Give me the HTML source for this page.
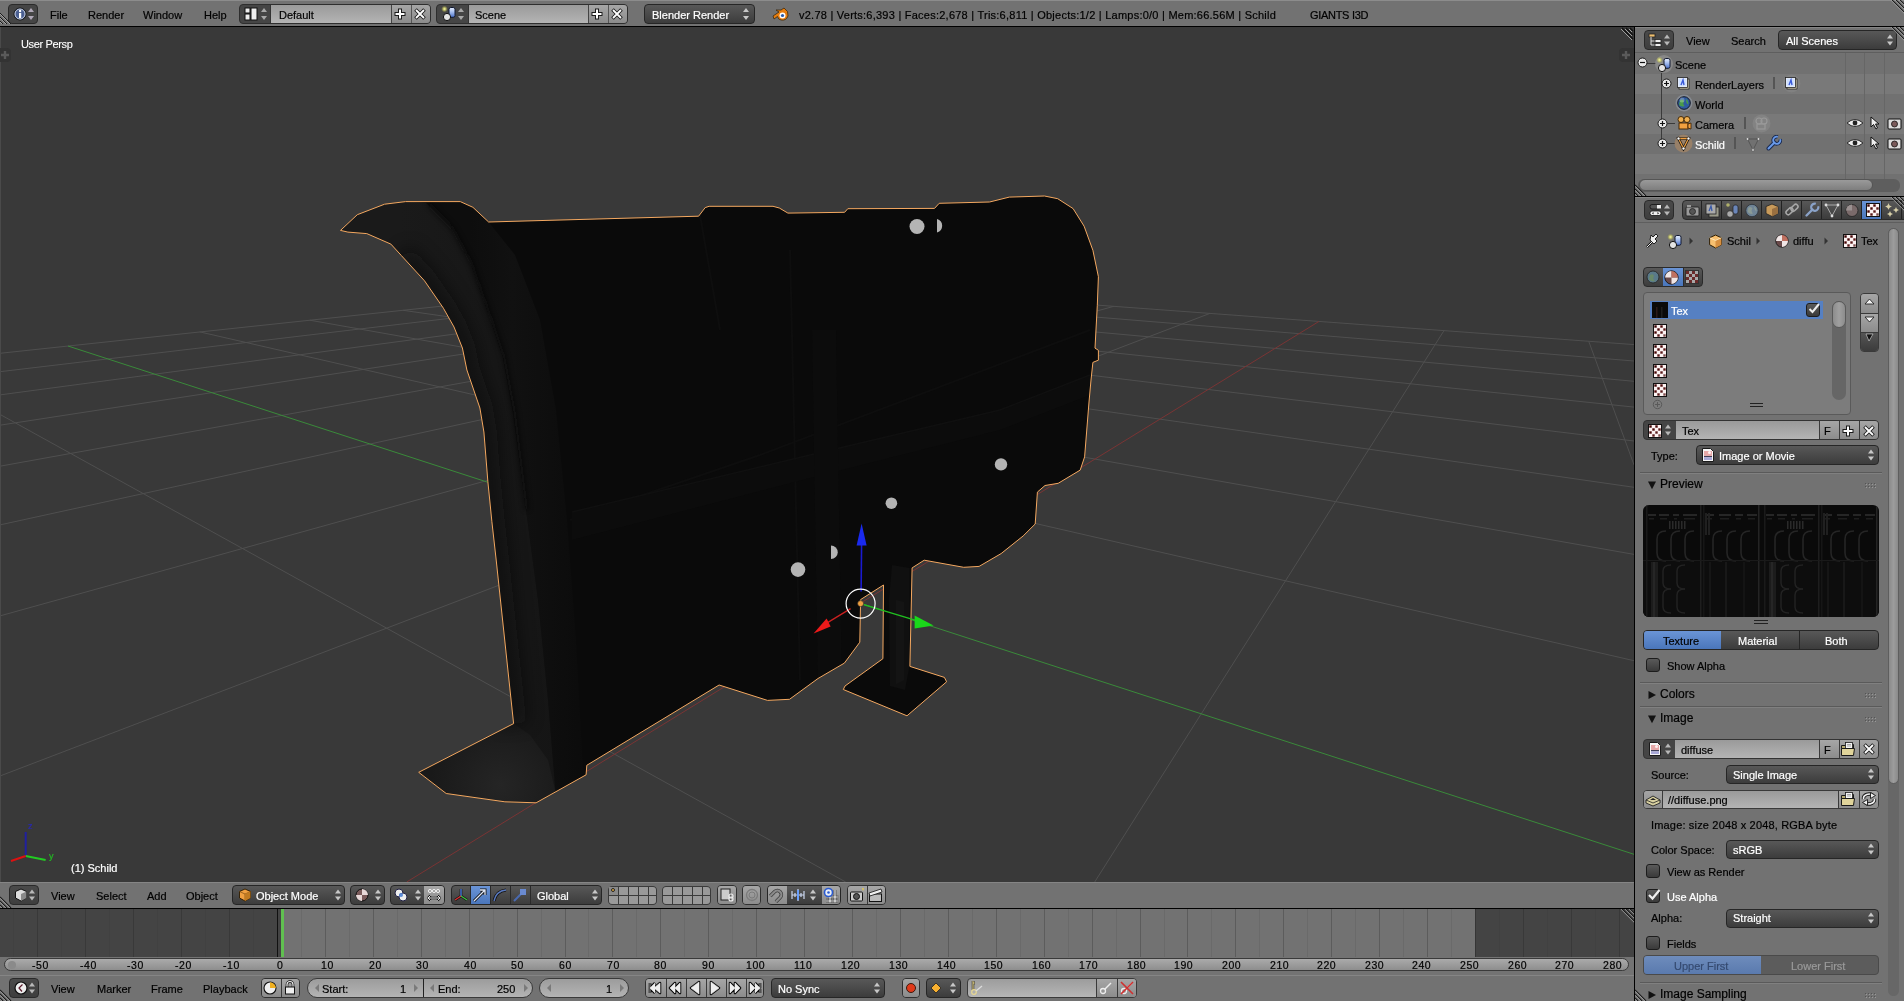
<!DOCTYPE html><html><head><meta charset="utf-8"><style>
*{box-sizing:border-box}
body{margin:0;width:1904px;height:1001px;overflow:hidden;background:#000;font-family:"Liberation Sans",sans-serif;font-size:11px;color:#000;position:relative}
.a{position:absolute}
.t{position:absolute;white-space:nowrap;line-height:11px;-webkit-text-stroke:0.2px currentColor;will-change:transform}
.hdr{position:absolute;background:#727272}
.wmenu{position:absolute;border:1px solid #262626;border-radius:4px;background:linear-gradient(#585858,#3c3c3c);color:#fff}
.wtxt{position:absolute;background:linear-gradient(#999,#b2b2b2)}
.wtool{position:absolute;background:linear-gradient(#a8a8a8,#8a8a8a)}
.wrad{position:absolute;background:linear-gradient(#555,#383838)}
.chk{position:absolute;width:14px;height:14px;border:1px solid #1c1c1c;border-radius:3px;background:linear-gradient(#5a5a5a,#3a3a3a)}
.sep{position:absolute;height:1px;background:#555}
.arr{position:absolute;width:0;height:0}
</style></head><body><div class="hdr" style="left:0;top:0;width:1904px;height:26px;border-top:1px solid #8c8c8c"></div><div class="a" style="left:0;top:26px;width:1904px;height:1px;background:#000"></div><div class="a" style="left:8px;top:4px;width:30px;height:20px;border-radius:4px;background:#454545;border:1px solid #2a2a2a"></div><svg class="a" style="left:13px;top:7px" width="14" height="14"><circle cx="7" cy="7" r="6" fill="#4a5f92" stroke="#111" stroke-width="1"/><circle cx="7" cy="7" r="5" fill="none" stroke="#c8d0e0" stroke-width="1"/><rect x="6" y="6" width="2.2" height="5" fill="#fff"/><circle cx="7.1" cy="4" r="1.2" fill="#fff"/></svg><svg class="a" style="left:27px;top:7px" width="8" height="14"><path d="M4 1 L7 5 L1 5Z M4 13 L7 9 L1 9Z" fill="#b0a8b8"/></svg><div class="t" style="left:50.0px;top:9.7px;color:#000;font-size:11px;">File</div><div class="t" style="left:88.0px;top:9.7px;color:#000;font-size:11px;">Render</div><div class="t" style="left:143.0px;top:9.7px;color:#000;font-size:11px;">Window</div><div class="t" style="left:204.0px;top:9.7px;color:#000;font-size:11px;">Help</div><div class="a" style="left:239px;top:4px;width:192px;height:20px;border-radius:4px;border:1px solid #2e2e2e;overflow:hidden;background:#454545"><div class="a" style="left:30px;top:0;width:121px;height:18px;background:linear-gradient(#9a9a9a,#b4b4b4);border-left:1px solid #333"></div><div class="a" style="left:151px;top:0;width:20px;height:18px;background:linear-gradient(#a6a6a6,#8c8c8c);border-left:1px solid #444"></div><div class="a" style="left:171px;top:0;width:20px;height:18px;background:linear-gradient(#a6a6a6,#8c8c8c);border-left:1px solid #555"></div></div><svg class="a" style="left:244px;top:7px" width="14" height="14"><rect x="1" y="1" width="5" height="5" fill="#eee" stroke="#111"/><rect x="1" y="7" width="5" height="6" fill="#eee" stroke="#111"/><rect x="7" y="1" width="6" height="12" fill="#eee" stroke="#111"/></svg><svg class="a" style="left:260px;top:7px" width="8" height="14"><path d="M4 1 L7 5 L1 5Z M4 13 L7 9 L1 9Z" fill="#a8a8a8"/></svg><div class="t" style="left:278.5px;top:9.7px;color:#000;font-size:11px;">Default</div><svg class="a" style="left:393px;top:7px" width="14" height="14"><path d="M7 1.5 V12.5 M1.5 7 H12.5" stroke="#1a1a1a" stroke-width="4"/><path d="M7 2.5 V11.5 M2.5 7 H11.5" stroke="#fff" stroke-width="2"/></svg><svg class="a" style="left:413px;top:7px" width="14" height="14"><path d="M2.5 2.5 L11.5 11.5 M11.5 2.5 L2.5 11.5" stroke="#1a1a1a" stroke-width="3.6"/><path d="M3 3 L11 11 M11 3 L3 11" stroke="#fff" stroke-width="1.8"/></svg><div class="a" style="left:436px;top:4px;width:192px;height:20px;border-radius:4px;border:1px solid #2e2e2e;overflow:hidden;background:#454545"><div class="a" style="left:31px;top:0;width:120px;height:18px;background:linear-gradient(#9a9a9a,#b4b4b4);border-left:1px solid #333"></div><div class="a" style="left:151px;top:0;width:20px;height:18px;background:linear-gradient(#a6a6a6,#8c8c8c);border-left:1px solid #444"></div><div class="a" style="left:171px;top:0;width:20px;height:18px;background:linear-gradient(#a6a6a6,#8c8c8c);border-left:1px solid #555"></div></div><svg class="a" style="left:441px;top:5px" width="16" height="16"><defs><radialGradient id="sg441_5"><stop offset="0" stop-color="#fbffb0"/><stop offset="0.4" stop-color="#d8d870" stop-opacity="0.8"/><stop offset="1" stop-color="#a0a040" stop-opacity="0"/></radialGradient><linearGradient id="cg441_5" x1="0" y1="0" x2="0" y2="1"><stop offset="0" stop-color="#e8f0ff"/><stop offset="0.45" stop-color="#a8c0f0"/><stop offset="1" stop-color="#4a70c8"/></linearGradient></defs><circle cx="3.5" cy="4" r="3.4" fill="url(#sg441_5)"/><rect x="8" y="2.5" width="6" height="9.8" rx="1.8" fill="url(#cg441_5)" stroke="#101830" stroke-width="1"/><circle cx="6" cy="12" r="3.6" fill="#e4e4e4" stroke="#111" stroke-width="1"/></svg><svg class="a" style="left:457px;top:7px" width="8" height="14"><path d="M4 1 L7 5 L1 5Z M4 13 L7 9 L1 9Z" fill="#a8a8a8"/></svg><div class="t" style="left:475.4px;top:9.7px;color:#000;font-size:11px;">Scene</div><svg class="a" style="left:590px;top:7px" width="14" height="14"><path d="M7 1.5 V12.5 M1.5 7 H12.5" stroke="#1a1a1a" stroke-width="4"/><path d="M7 2.5 V11.5 M2.5 7 H11.5" stroke="#fff" stroke-width="2"/></svg><svg class="a" style="left:610px;top:7px" width="14" height="14"><path d="M2.5 2.5 L11.5 11.5 M11.5 2.5 L2.5 11.5" stroke="#1a1a1a" stroke-width="3.6"/><path d="M3 3 L11 11 M11 3 L3 11" stroke="#fff" stroke-width="1.8"/></svg><div class="wmenu" style="left:644px;top:4px;width:111px;height:20px"></div><div class="t" style="left:652.2px;top:9.7px;color:#fff;font-size:11px;">Blender Render</div><svg class="a" style="left:742px;top:7px" width="8" height="14"><path d="M4 1 L7 5 L1 5Z M4 13 L7 9 L1 9Z" fill="#c8c8c8"/></svg><svg class="a" style="left:772px;top:6px" width="18" height="16"><path d="M1 10 L7 6 L4 4 L9 4 L12 2 Q17 5 16 10 Q14 15 9 14 Q6 13.5 5.5 10.5 L2 13Z" fill="#e87d0d" stroke="#3a2a10" stroke-width="0.8"/><circle cx="10.5" cy="9.5" r="3" fill="#fff"/><circle cx="10.5" cy="9.5" r="1.6" fill="#2a5aa8"/></svg><div class="t" style="left:799.4px;top:9.7px;color:#000;font-size:11px;letter-spacing:0.24px">v2.78 | Verts:6,393 | Faces:2,678 | Tris:6,811 | Objects:1/2 | Lamps:0/0 | Mem:66.56M | Schild</div><div class="t" style="left:1309.6px;top:9.7px;color:#000;font-size:11px;letter-spacing:-0.3px">GIANTS I3D</div><svg class="a" style="left:0px;top:13px" width="12" height="12"><path d="M0 0 L11 11 M0 4 L7 11 M0 8 L3 11" stroke="#1a1a1a" stroke-width="1"/><path d="M0 1 L10 11 M0 5 L6 11 M0 9 L2 11" stroke="#a0a0a0" stroke-width="1"/></svg><svg class="a" style="left:1890px;top:0" width="14" height="14"><path d="M2 0 L14 12 M6 0 L14 8 M10 0 L14 4" stroke="#1e1e1e" stroke-width="1.2"/><path d="M0.8 0 L14 13.2 M4.8 0 L14 9.2 M8.8 0 L14 5.2" stroke="#a8a8a8" stroke-width="0.9"/></svg><div class="a" style="left:0;top:27px;width:1634px;height:855px;background:#393939;overflow:hidden"><svg class="a" style="left:0;top:0" width="1634" height="855"><g stroke="#4f4f4f" stroke-width="1"><line x1="1634.0" y1="437.9" x2="1588.7" y2="314.2"/><line x1="845.7" y1="855.0" x2="0.0" y2="387.4"/><line x1="1094.7" y1="855.0" x2="1444.0" y2="303.6"/><line x1="1634.0" y1="633.7" x2="199.8" y2="304.9"/><line x1="0.0" y1="749.0" x2="1209.9" y2="286.4"/><line x1="1634.0" y1="527.4" x2="309.8" y2="293.2"/><line x1="0.0" y1="588.9" x2="1113.8" y2="279.3"/><line x1="1634.0" y1="460.3" x2="403.1" y2="283.3"/><line x1="0.0" y1="497.9" x2="1028.6" y2="273.1"/><line x1="1634.0" y1="414.0" x2="483.2" y2="274.7"/><line x1="0.0" y1="439.2" x2="952.5" y2="267.5"/><line x1="1634.0" y1="380.1" x2="552.6" y2="267.3"/><line x1="0.0" y1="398.2" x2="884.1" y2="262.4"/><line x1="1634.0" y1="354.3" x2="613.5" y2="260.8"/><line x1="0.0" y1="367.9" x2="822.3" y2="257.9"/><line x1="1634.0" y1="334.0" x2="667.2" y2="255.1"/><line x1="0.0" y1="344.7" x2="766.2" y2="253.8"/><line x1="1634.0" y1="317.6" x2="715.0" y2="250.0"/><line x1="0.0" y1="326.3" x2="715.0" y2="250.0"/></g><line x1="406.7" y1="855.0" x2="1319.0" y2="294.4" stroke="#7a3434"/><line x1="1634.0" y1="827.3" x2="68.0" y2="319.0" stroke="#3a8a3a"/><defs><clipPath id="bodyclip"><polygon points="340.5,203.4 357.3,187.7 384.6,177.2 405.6,174.6 460.3,174.6 472.9,180.3 488.6,195.0 698.6,189.2 705.2,180.6 709.1,179.3 773.0,179.3 779.3,181.0 787.9,186.1 844.6,185.3 847.8,181.7 934.5,181.4 939.2,176.3 989.6,175.0 1009.3,170.1 1044.5,169.0 1057.7,171.7 1073.1,181.6 1084.1,199.2 1092.9,223.3 1098.4,249.7 1097.3,278.3 1095.0,321.1 1098.4,323.3 1098.4,333.2 1092.9,335.4 1091.0,353.0 1089.0,375.0 1084.6,429.9 1080.2,443.1 1058.2,456.3 1045.0,458.5 1037.4,465.1 1035.2,497.0 1023.1,509.0 1001.1,526.6 979.1,539.4 963.7,540.3 924.2,533.2 912.1,540.9 909.9,639.4 944.4,650.4 946.6,654.8 907.0,688.8 843.3,662.5 845.0,659.0 882.9,631.7 883.5,558.0 860.6,572.6 859.8,615.2 844.4,636.1 818.0,651.5 789.5,672.3 767.5,673.4 719.1,658.0 586.8,738.3 586.1,747.8 536.1,775.8 504.9,774.8 446.2,766.5 418.7,745.3 513.6,696.6 496.2,533.0 491.9,494.8 487.9,454.9 483.9,405.0 479.9,381.0 466.9,343.0 462.4,321.0 454.0,300.0 443.4,281.2 424.5,253.8 401.4,228.6 390.9,217.1 366.8,206.6 347.9,205.1"/></clipPath></defs><polygon points="340.5,203.4 357.3,187.7 384.6,177.2 405.6,174.6 460.3,174.6 472.9,180.3 488.6,195.0 698.6,189.2 705.2,180.6 709.1,179.3 773.0,179.3 779.3,181.0 787.9,186.1 844.6,185.3 847.8,181.7 934.5,181.4 939.2,176.3 989.6,175.0 1009.3,170.1 1044.5,169.0 1057.7,171.7 1073.1,181.6 1084.1,199.2 1092.9,223.3 1098.4,249.7 1097.3,278.3 1095.0,321.1 1098.4,323.3 1098.4,333.2 1092.9,335.4 1091.0,353.0 1089.0,375.0 1084.6,429.9 1080.2,443.1 1058.2,456.3 1045.0,458.5 1037.4,465.1 1035.2,497.0 1023.1,509.0 1001.1,526.6 979.1,539.4 963.7,540.3 924.2,533.2 912.1,540.9 909.9,639.4 944.4,650.4 946.6,654.8 907.0,688.8 843.3,662.5 845.0,659.0 882.9,631.7 883.5,558.0 860.6,572.6 859.8,615.2 844.4,636.1 818.0,651.5 789.5,672.3 767.5,673.4 719.1,658.0 586.8,738.3 586.1,747.8 536.1,775.8 504.9,774.8 446.2,766.5 418.7,745.3 513.6,696.6 496.2,533.0 491.9,494.8 487.9,454.9 483.9,405.0 479.9,381.0 466.9,343.0 462.4,321.0 454.0,300.0 443.4,281.2 424.5,253.8 401.4,228.6 390.9,217.1 366.8,206.6 347.9,205.1" fill="#0a0a0a"/><g clip-path="url(#bodyclip)"><defs><linearGradient id="ga" gradientUnits="userSpaceOnUse" x1="400" y1="0" x2="560" y2="0"><stop offset="0" stop-color="#1a1a1a"/><stop offset="1" stop-color="#151515"/></linearGradient><linearGradient id="gb" gradientUnits="userSpaceOnUse" x1="470" y1="0" x2="590" y2="0"><stop offset="0" stop-color="#0d0d0d"/><stop offset="0.35" stop-color="#111111"/><stop offset="1" stop-color="#0b0b0b"/></linearGradient><radialGradient id="gf" gradientUnits="userSpaceOnUse" cx="500" cy="758" r="70"><stop offset="0" stop-color="#252525"/><stop offset="1" stop-color="#191919"/></radialGradient></defs><polygon points="425.9,175.8 460.3,174.6 472.9,180.3 488.6,195.0 515.0,228.0 540.0,293.0 556.0,383.0 567.0,493.0 576.0,613.0 583.0,743.0 586.1,747.8 555.5,764.9 548.0,673.0 538.0,573.0 526.0,483.0 513.0,386.8 502.6,329.2 489.8,290.9 470.7,236.5 451.5,201.4" fill="url(#gb)"/><polygon points="405.6,174.6 425.9,175.8 451.5,201.4 470.7,236.5 489.8,290.9 502.6,329.2 513.0,386.8 526.0,483.0 538.0,573.0 548.0,673.0 555.5,764.9 536.1,775.8 504.9,774.8 446.2,766.5 418.7,745.3 513.6,696.6 496.2,533.0 491.9,494.8 487.9,454.9 483.9,405.0 479.9,381.0 466.9,343.0 462.4,321.0 454.0,300.0 443.4,281.2 424.5,253.8 401.4,228.6 390.9,217.1 366.8,206.6 347.9,205.1 340.5,203.4 357.3,187.7 384.6,177.2" fill="url(#ga)"/><polygon points="418.7,745.3 513.6,696.6 530.0,708.0 548.0,733.0 555.5,764.9 536.1,775.8 504.9,774.8 446.2,766.5" fill="url(#gf)"/><defs><filter id="blur5" x="-50%" y="-50%" width="200%" height="200%"><feGaussianBlur stdDeviation="9"/></filter><filter id="blur2" x="-50%" y="-50%" width="200%" height="200%"><feGaussianBlur stdDeviation="2.5"/></filter></defs><polyline points="401.4,228.6 424.5,253.8 443.4,281.2 454.0,300.0 462.4,321.0 466.9,343.0 479.9,381.0 483.9,405.0 487.9,454.9 491.9,494.8 496.2,533.0 513.6,696.6" fill="none" stroke="#0a0a0a" stroke-width="26" stroke-linejoin="round" opacity="0.55" filter="url(#blur5)"/><path d="M 428.0 176.0 L 453.0 202.0 L 472.0 237.0 L 491.0 291.0 L 504.0 329.0 L 515.0 387.0 L 527.0 483.0" stroke="#0c0c0c" stroke-width="4" fill="none" opacity="0.6" filter="url(#blur2)"/><g stroke="#0e0e0e" stroke-width="2" fill="none"><path d="M 570 493 L 760 428"/><path d="M 760 428 L 1090 303"/><path d="M 790 223 L 800 653"/><path d="M 700 188 L 720 303"/></g><polygon points="892.0,538.0 909.5,541.0 909.5,639.0 905.0,663.0 890.0,659.0 889.0,573.0" fill="#101010"/><polygon points="896.0,573.0 904.0,575.0 904.0,653.0 896.0,657.0" fill="#141414"/><polygon points="572.0,485.0 810.0,428.0 1000.0,383.0 1090.0,348.0 1090.0,368.0 1000.0,403.0 810.0,451.0 572.0,513.0" fill="#0c0c0c"/><polyline points="572.0,485.0 810.0,428.0 1000.0,383.0 1090.0,348.0" fill="none" stroke="#101010" stroke-width="1.5"/><polygon points="812.0,303.0 836.0,303.0 842.0,663.0 818.0,667.0" fill="#0c0c0c"/></g><polygon points="340.5,203.4 357.3,187.7 384.6,177.2 405.6,174.6 460.3,174.6 472.9,180.3 488.6,195.0 698.6,189.2 705.2,180.6 709.1,179.3 773.0,179.3 779.3,181.0 787.9,186.1 844.6,185.3 847.8,181.7 934.5,181.4 939.2,176.3 989.6,175.0 1009.3,170.1 1044.5,169.0 1057.7,171.7 1073.1,181.6 1084.1,199.2 1092.9,223.3 1098.4,249.7 1097.3,278.3 1095.0,321.1 1098.4,323.3 1098.4,333.2 1092.9,335.4 1091.0,353.0 1089.0,375.0 1084.6,429.9 1080.2,443.1 1058.2,456.3 1045.0,458.5 1037.4,465.1 1035.2,497.0 1023.1,509.0 1001.1,526.6 979.1,539.4 963.7,540.3 924.2,533.2 912.1,540.9 909.9,639.4 944.4,650.4 946.6,654.8 907.0,688.8 843.3,662.5 845.0,659.0 882.9,631.7 883.5,558.0 860.6,572.6 859.8,615.2 844.4,636.1 818.0,651.5 789.5,672.3 767.5,673.4 719.1,658.0 586.8,738.3 586.1,747.8 536.1,775.8 504.9,774.8 446.2,766.5 418.7,745.3 513.6,696.6 496.2,533.0 491.9,494.8 487.9,454.9 483.9,405.0 479.9,381.0 466.9,343.0 462.4,321.0 454.0,300.0 443.4,281.2 424.5,253.8 401.4,228.6 390.9,217.1 366.8,206.6 347.9,205.1" fill="none" stroke="#f4a860" stroke-width="1"/><circle cx="917.0" cy="199.5" r="7.5" fill="#b4b4b4"/><circle cx="1001.0" cy="437.4" r="6.2" fill="#b4b4b4"/><circle cx="891.4" cy="476.2" r="5.8" fill="#b4b4b4"/><circle cx="798.0" cy="542.6" r="7.3" fill="#b4b4b4"/><path d="M 937 192.0 A 7 7 0 0 1 937 205.5 Z" fill="#b4b4b4"/><path d="M 831 518.5 A 6.5 6.5 0 0 1 831 532.0 Z" fill="#b4b4b4"/><line x1="861.1" y1="564.6" x2="861.6" y2="514.6" stroke="#1a1ad0" stroke-width="1.6"/><path d="M 861.6 496.6 L 856.6 518.6 L 866.6 518.6 Z" fill="#1a2aee"/><line x1="850.6" y1="581.6" x2="822.6" y2="598.6" stroke="#cc2020" stroke-width="1.3"/><path d="M 813.6 606.6 L 826.6 591.6 L 830.6 599.6 Z" fill="#ee1a1a"/><line x1="863.6" y1="577.6" x2="916.6" y2="593.6" stroke="#20c020" stroke-width="1.3"/><path d="M 933.6 598.6 L 914.6 588.6 L 914.6 601.6 Z" fill="#1ad81a"/><circle cx="860.6" cy="576.6" r="14.5" fill="none" stroke="#fff" stroke-width="1.2"/><circle cx="860.6" cy="576.6" r="3" fill="#f0a040" stroke="#222" stroke-width="0.6"/><line x1="25.7" y1="829.0" x2="25.7" y2="805.0" stroke="#2020a0" stroke-width="2"/><line x1="25.7" y1="829.0" x2="45.6" y2="833.0" stroke="#22cc22" stroke-width="2"/><line x1="25.7" y1="829.0" x2="11" y2="834.0" stroke="#dd1111" stroke-width="2"/></svg><div class="a" style="left:0;top:0;width:1px;height:855px;background:#4a4a4a"></div><div class="t" style="left:20.5px;top:11.7px;color:#fff;font-size:11px;letter-spacing:-0.35px;-webkit-text-stroke:0.1px #fff">User Persp</div><div class="t" style="left:70.6px;top:835.7px;color:#fff;font-size:11px;">(1) Schild</div><div class="t" style="left:27.5px;top:794.4px;color:#2828b0;font-size:9px;">z</div><div class="t" style="left:48.5px;top:824.4px;color:#22bb22;font-size:9px;">y</div><svg class="a" style="left:0;top:21px" width="12" height="14"><rect x="-4" y="0" width="15" height="14" rx="4" fill="#333"/><path d="M5 3 V11 M1 7 H9" stroke="#5a5a5a" stroke-width="2.4"/></svg><svg class="a" style="left:1619px;top:21px" width="15" height="14"><rect x="0" y="0" width="19" height="14" rx="4" fill="#333"/><path d="M7 3 V11 M3 7 H11" stroke="#5a5a5a" stroke-width="2.4"/></svg><svg class="a" style="left:1619px;top:0" width="15" height="15"><path d="M3 1 L14 12 M7 1 L14 8 M11 1 L14 4" stroke="#111" stroke-width="1.2"/><path d="M2 2 L13 13 M6 2 L13 9 M10 2 L13 5" stroke="#bbb" stroke-width="0.8"/></svg></div><div class="hdr" style="left:0;top:882px;width:1634px;height:26px;border-top:1px solid #858585"></div><div class="a" style="left:0;top:908px;width:1634px;height:1px;background:#000"></div><div class="a" style="left:9px;top:885px;width:30px;height:20px;border-radius:4px;background:linear-gradient(#4a4a4a,#3e3e3e);border:1px solid #2a2a2a"></div><svg class="a" style="left:14px;top:888px" width="14" height="14"><path d="M7 1 L12.5 3.5 L12.5 10 L7 13 L1.5 10 L1.5 3.5Z" fill="#ddd" stroke="#111" stroke-width="1"/><path d="M7 6 L12.5 3.5 L12.5 10 L7 13Z" fill="#8a8a8a"/></svg><svg class="a" style="left:28.0px;top:888.0px" width="8" height="14"><path d="M4 1.5 L7 5.5 L1 5.5Z M4 12.5 L7 8.5 L1 8.5Z" fill="#b8b8b8"/></svg><div class="t" style="left:51.2px;top:890.7px;color:#000;font-size:11px;">View</div><div class="t" style="left:96.4px;top:890.7px;color:#000;font-size:11px;">Select</div><div class="t" style="left:147.3px;top:890.7px;color:#000;font-size:11px;">Add</div><div class="t" style="left:186.4px;top:890.7px;color:#000;font-size:11px;">Object</div><div class="wmenu" style="left:232px;top:885px;width:113px;height:20px"></div><svg class="a" style="left:238px;top:888px" width="14" height="14" viewBox="0 0 14 14"><path d="M7 1 L12.5 3.5 L12.5 10 L7 13 L1.5 10 L1.5 3.5Z" fill="#f0a040" stroke="#2a1a00" stroke-width="0.9"/><path d="M1.5 3.5 L7 6 L12.5 3.5 M7 6 V13" stroke="#7a4a10" stroke-width="0.7" fill="none"/><path d="M7 6 L12.5 3.5 L12.5 10 L7 13Z" fill="#c07a20"/></svg><div class="t" style="left:256.0px;top:890.7px;color:#fff;font-size:11px;">Object Mode</div><svg class="a" style="left:334.0px;top:888.0px" width="8" height="14"><path d="M4 1.5 L7 5.5 L1 5.5Z M4 12.5 L7 8.5 L1 8.5Z" fill="#c8c8c8"/></svg><div class="wmenu" style="left:350px;top:885px;width:35px;height:20px"></div><svg class="a" style="left:355px;top:888px" width="14" height="14"><circle cx="7" cy="7" r="6" fill="#7a5a5a" stroke="#111" stroke-width="1"/><path d="M7 1 A6 6 0 0 1 13 7 L7 7Z M7 7 L1 7 A6 6 0 0 0 7 13Z" fill="#e8d8d8"/></svg><svg class="a" style="left:374.0px;top:888.0px" width="8" height="14"><path d="M4 1.5 L7 5.5 L1 5.5Z M4 12.5 L7 8.5 L1 8.5Z" fill="#c8c8c8"/></svg><div class="wmenu" style="left:390px;top:885px;width:55px;height:20px"></div><div class="a" style="left:424px;top:886px;width:20px;height:18px;background:linear-gradient(#a6a6a6,#8c8c8c);border-radius:0 3px 3px 0"></div><svg class="a" style="left:394px;top:888px" width="14" height="14"><circle cx="5" cy="5" r="4" fill="#eee" stroke="#224" stroke-width="1"/><circle cx="9" cy="9" r="4" fill="#eee" stroke="#224" stroke-width="1"/><circle cx="7" cy="7" r="2" fill="#5a8ad8"/></svg><svg class="a" style="left:414.0px;top:888.0px" width="8" height="14"><path d="M4 1.5 L7 5.5 L1 5.5Z M4 12.5 L7 8.5 L1 8.5Z" fill="#c8c8c8"/></svg><svg class="a" style="left:427px;top:888px" width="14" height="14"><circle cx="3" cy="3" r="1.6" fill="none" stroke="#eee"/><circle cx="7" cy="3" r="1.6" fill="none" stroke="#eee"/><circle cx="11" cy="3" r="1.6" fill="none" stroke="#eee"/><path d="M1 10 H13 M1 10 L3.5 7.5 M1 10 L3.5 12.5 M13 10 L10.5 7.5 M13 10 L10.5 12.5" stroke="#111" stroke-width="2.4"/><path d="M1 10 H13 M1 10 L3.5 7.5 M1 10 L3.5 12.5 M13 10 L10.5 7.5 M13 10 L10.5 12.5" stroke="#eee" stroke-width="1"/></svg><div class="a" style="left:451px;top:885px;width:151px;height:20px;border-radius:4px;border:1px solid #262626;overflow:hidden;background:linear-gradient(#585858,#3c3c3c)"><div class="a" style="left:18px;top:0;width:20px;height:18px;background:linear-gradient(#6a94d6,#4a76bb)"></div><div class="a" style="left:18px;top:0;width:1px;height:18px;background:#2a2a2a"></div><div class="a" style="left:38px;top:0;width:1px;height:18px;background:#2a2a2a"></div><div class="a" style="left:58px;top:0;width:1px;height:18px;background:#2a2a2a"></div><div class="a" style="left:78px;top:0;width:1px;height:18px;background:#2a2a2a"></div></div><svg class="a" style="left:453px;top:887px" width="16" height="16"><path d="M8 2 V9 L2 13 M8 9 L14 13" stroke="#111" stroke-width="2.6" fill="none"/><path d="M8 2 V9" stroke="#4a7ae0" stroke-width="1.4"/><path d="M8 9 L2 13" stroke="#e03030" stroke-width="1.4"/><path d="M8 9 L14 13" stroke="#40c040" stroke-width="1.4"/></svg><svg class="a" style="left:472px;top:887px" width="16" height="16"><path d="M2 14 L13 3 M8 3 H13 V8" stroke="#111" stroke-width="3" fill="none"/><path d="M2 14 L13 3 M8 3 H13 V8" stroke="#dfe8f8" stroke-width="1.3" fill="none"/></svg><svg class="a" style="left:492px;top:887px" width="16" height="16"><path d="M2 14 Q4 4 14 3" stroke="#111" stroke-width="3" fill="none"/><path d="M2 14 Q4 4 14 3" stroke="#5a7ac0" stroke-width="1.4" fill="none"/></svg><svg class="a" style="left:512px;top:887px" width="16" height="16"><path d="M2 14 L9 7" stroke="#4a6ab0" stroke-width="2" fill="none"/><rect x="8" y="2" width="6" height="6" fill="#6a8ad0"/></svg><div class="t" style="left:537.0px;top:890.7px;color:#fff;font-size:11px;">Global</div><svg class="a" style="left:591.0px;top:888.0px" width="8" height="14"><path d="M4 1.5 L7 5.5 L1 5.5Z M4 12.5 L7 8.5 L1 8.5Z" fill="#c8c8c8"/></svg><div class="a" style="left:608px;top:886px;width:49px;height:19px;border-radius:4px;border:1px solid #3a3a3a;overflow:hidden;background:#3a3a3a"><div class="a" style="left:0px;top:0px;width:9px;height:8px;background:#999"></div><div class="a" style="left:10px;top:0px;width:9px;height:8px;background:#999"></div><div class="a" style="left:20px;top:0px;width:9px;height:8px;background:#999"></div><div class="a" style="left:30px;top:0px;width:9px;height:8px;background:#999"></div><div class="a" style="left:40px;top:0px;width:9px;height:8px;background:#999"></div><div class="a" style="left:0px;top:9px;width:9px;height:8px;background:#999"></div><div class="a" style="left:10px;top:9px;width:9px;height:8px;background:#999"></div><div class="a" style="left:20px;top:9px;width:9px;height:8px;background:#999"></div><div class="a" style="left:30px;top:9px;width:9px;height:8px;background:#999"></div><div class="a" style="left:40px;top:9px;width:9px;height:8px;background:#999"></div></div><div class="a" style="left:662px;top:886px;width:49px;height:19px;border-radius:4px;border:1px solid #3a3a3a;overflow:hidden;background:#3a3a3a"><div class="a" style="left:0px;top:0px;width:9px;height:8px;background:#999"></div><div class="a" style="left:10px;top:0px;width:9px;height:8px;background:#999"></div><div class="a" style="left:20px;top:0px;width:9px;height:8px;background:#999"></div><div class="a" style="left:30px;top:0px;width:9px;height:8px;background:#999"></div><div class="a" style="left:40px;top:0px;width:9px;height:8px;background:#999"></div><div class="a" style="left:0px;top:9px;width:9px;height:8px;background:#999"></div><div class="a" style="left:10px;top:9px;width:9px;height:8px;background:#999"></div><div class="a" style="left:20px;top:9px;width:9px;height:8px;background:#999"></div><div class="a" style="left:30px;top:9px;width:9px;height:8px;background:#999"></div><div class="a" style="left:40px;top:9px;width:9px;height:8px;background:#999"></div></div><div class="a" style="left:609px;top:887px;width:9px;height:8px;background:#8a8a8a"></div><div class="a" style="left:611px;top:888px;width:4px;height:4px;border-radius:2px;background:#e8b040;border:1px solid #222"></div><div class="a" style="left:717px;top:885px;width:20px;height:20px;border-radius:4px;border:1px solid #303030;overflow:hidden"><div class="a" style="left:0px;top:0;width:20px;height:18px;background:linear-gradient(#a6a6a6,#8c8c8c);"></div></div><svg class="a" style="left:719px;top:887px" width="16" height="16"><rect x="2" y="2" width="9" height="11" fill="#ccc" stroke="#222"/><circle cx="12" cy="9" r="2" fill="none" stroke="#eee" stroke-width="1.2"/><circle cx="12" cy="12" r="2" fill="none" stroke="#eee" stroke-width="1.2"/></svg><div class="a" style="left:742px;top:885px;width:19px;height:20px;border-radius:4px;border:1px solid #303030;overflow:hidden"><div class="a" style="left:0px;top:0;width:19px;height:18px;background:linear-gradient(#a6a6a6,#8c8c8c);"></div></div><svg class="a" style="left:744px;top:887px" width="16" height="16"><circle cx="8" cy="8" r="5.5" fill="none" stroke="#7a7a7a" stroke-width="1.3"/><circle cx="8" cy="8" r="3" fill="none" stroke="#7a7a7a" stroke-width="1"/></svg><div class="a" style="left:767px;top:885px;width:74px;height:20px;border-radius:4px;border:1px solid #262626;overflow:hidden;background:linear-gradient(#585858,#3c3c3c)"><div class="a" style="left:0;top:0;width:19px;height:18px;background:linear-gradient(#a6a6a6,#8c8c8c)"></div><div class="a" style="left:54px;top:0;width:20px;height:18px;background:linear-gradient(#a6a6a6,#8c8c8c)"></div></div><svg class="a" style="left:769px;top:887px" width="16" height="16"><g transform="rotate(-135 8 8)"><path d="M4 2.5 V8.5 A4 4 0 0 0 12 8.5 V2.5" stroke="#3a3a3a" stroke-width="3.6" fill="none"/><path d="M4 2.5 V8.5 A4 4 0 0 0 12 8.5 V2.5" stroke="#8a8a8a" stroke-width="2.2" fill="none"/></g></svg><svg class="a" style="left:790px;top:887px" width="16" height="16"><path d="M2 4 V12 M5 6 V10 M8 2 V14 M11 6 V10 M14 4 V12 M2 8 H14" stroke="#ccd8f0" stroke-width="1.2"/><path d="M8 3 V13" stroke="#6aa0ff" stroke-width="2"/></svg><svg class="a" style="left:809.0px;top:888.0px" width="8" height="14"><path d="M4 1.5 L7 5.5 L1 5.5Z M4 12.5 L7 8.5 L1 8.5Z" fill="#c8c8c8"/></svg><svg class="a" style="left:823px;top:887px" width="16" height="16"><path d="M7 7 V15.5 M12 3 V15.5 M3 10 H15.5 M3 14 H15.5" stroke="#333" stroke-width="2.6"/><path d="M7 7 V15.5 M12 3 V15.5 M3 10 H15.5 M3 14 H15.5" stroke="#f0f0f0" stroke-width="1.2"/><circle cx="5.5" cy="5.5" r="4" fill="#e8eef8" stroke="#2a5ad0" stroke-width="1.6"/><circle cx="5.5" cy="5.5" r="1.3" fill="#2a5ad0"/></svg><div class="a" style="left:847px;top:885px;width:39px;height:20px;border-radius:4px;border:1px solid #303030;overflow:hidden"><div class="a" style="left:0px;top:0;width:19px;height:18px;background:linear-gradient(#a6a6a6,#8c8c8c);"></div><div class="a" style="left:19px;top:0;width:20px;height:18px;background:linear-gradient(#a6a6a6,#8c8c8c);border-left:1px solid #3a3a3a"></div></div><svg class="a" style="left:849px;top:887px" width="16" height="16"><rect x="1.5" y="5" width="12" height="9" rx="1" fill="#ccc" stroke="#111"/><circle cx="7.5" cy="9.5" r="3" fill="#555" stroke="#111"/><path d="M13 1 L14 4 L15 1.5" fill="#f0d040"/></svg><svg class="a" style="left:868px;top:887px" width="16" height="16"><rect x="1.5" y="7" width="12" height="7.5" fill="#bbb" stroke="#111"/><path d="M1 6 L13 2 L14 5 L2 9Z" fill="#eee" stroke="#111" stroke-width="0.8"/></svg><div class="a" style="left:0;top:909px;width:1634px;height:48px;background:#444"></div><div class="a" style="left:281px;top:909px;width:1194px;height:48px;background:#727272"></div><div class="a" style="left:13px;top:909px;width:1px;height:48px;background:#414141"></div><div class="a" style="left:37px;top:909px;width:1px;height:48px;background:#393939"></div><div class="a" style="left:61px;top:909px;width:1px;height:48px;background:#414141"></div><div class="a" style="left:85px;top:909px;width:1px;height:48px;background:#393939"></div><div class="a" style="left:109px;top:909px;width:1px;height:48px;background:#414141"></div><div class="a" style="left:133px;top:909px;width:1px;height:48px;background:#393939"></div><div class="a" style="left:157px;top:909px;width:1px;height:48px;background:#414141"></div><div class="a" style="left:181px;top:909px;width:1px;height:48px;background:#393939"></div><div class="a" style="left:205px;top:909px;width:1px;height:48px;background:#414141"></div><div class="a" style="left:229px;top:909px;width:1px;height:48px;background:#393939"></div><div class="a" style="left:253px;top:909px;width:1px;height:48px;background:#414141"></div><div class="a" style="left:277px;top:909px;width:1px;height:48px;background:#393939"></div><div class="a" style="left:301px;top:909px;width:1px;height:48px;background:#6a6a6a"></div><div class="a" style="left:325px;top:909px;width:1px;height:48px;background:#5c5c5c"></div><div class="a" style="left:349px;top:909px;width:1px;height:48px;background:#6a6a6a"></div><div class="a" style="left:373px;top:909px;width:1px;height:48px;background:#5c5c5c"></div><div class="a" style="left:397px;top:909px;width:1px;height:48px;background:#6a6a6a"></div><div class="a" style="left:421px;top:909px;width:1px;height:48px;background:#5c5c5c"></div><div class="a" style="left:445px;top:909px;width:1px;height:48px;background:#6a6a6a"></div><div class="a" style="left:469px;top:909px;width:1px;height:48px;background:#5c5c5c"></div><div class="a" style="left:493px;top:909px;width:1px;height:48px;background:#6a6a6a"></div><div class="a" style="left:517px;top:909px;width:1px;height:48px;background:#5c5c5c"></div><div class="a" style="left:541px;top:909px;width:1px;height:48px;background:#6a6a6a"></div><div class="a" style="left:565px;top:909px;width:1px;height:48px;background:#5c5c5c"></div><div class="a" style="left:588px;top:909px;width:1px;height:48px;background:#6a6a6a"></div><div class="a" style="left:612px;top:909px;width:1px;height:48px;background:#5c5c5c"></div><div class="a" style="left:636px;top:909px;width:1px;height:48px;background:#6a6a6a"></div><div class="a" style="left:660px;top:909px;width:1px;height:48px;background:#5c5c5c"></div><div class="a" style="left:684px;top:909px;width:1px;height:48px;background:#6a6a6a"></div><div class="a" style="left:708px;top:909px;width:1px;height:48px;background:#5c5c5c"></div><div class="a" style="left:732px;top:909px;width:1px;height:48px;background:#6a6a6a"></div><div class="a" style="left:756px;top:909px;width:1px;height:48px;background:#5c5c5c"></div><div class="a" style="left:780px;top:909px;width:1px;height:48px;background:#6a6a6a"></div><div class="a" style="left:804px;top:909px;width:1px;height:48px;background:#5c5c5c"></div><div class="a" style="left:828px;top:909px;width:1px;height:48px;background:#6a6a6a"></div><div class="a" style="left:852px;top:909px;width:1px;height:48px;background:#5c5c5c"></div><div class="a" style="left:876px;top:909px;width:1px;height:48px;background:#6a6a6a"></div><div class="a" style="left:900px;top:909px;width:1px;height:48px;background:#5c5c5c"></div><div class="a" style="left:924px;top:909px;width:1px;height:48px;background:#6a6a6a"></div><div class="a" style="left:948px;top:909px;width:1px;height:48px;background:#5c5c5c"></div><div class="a" style="left:972px;top:909px;width:1px;height:48px;background:#6a6a6a"></div><div class="a" style="left:996px;top:909px;width:1px;height:48px;background:#5c5c5c"></div><div class="a" style="left:1020px;top:909px;width:1px;height:48px;background:#6a6a6a"></div><div class="a" style="left:1044px;top:909px;width:1px;height:48px;background:#5c5c5c"></div><div class="a" style="left:1068px;top:909px;width:1px;height:48px;background:#6a6a6a"></div><div class="a" style="left:1092px;top:909px;width:1px;height:48px;background:#5c5c5c"></div><div class="a" style="left:1116px;top:909px;width:1px;height:48px;background:#6a6a6a"></div><div class="a" style="left:1140px;top:909px;width:1px;height:48px;background:#5c5c5c"></div><div class="a" style="left:1164px;top:909px;width:1px;height:48px;background:#6a6a6a"></div><div class="a" style="left:1187px;top:909px;width:1px;height:48px;background:#5c5c5c"></div><div class="a" style="left:1211px;top:909px;width:1px;height:48px;background:#6a6a6a"></div><div class="a" style="left:1235px;top:909px;width:1px;height:48px;background:#5c5c5c"></div><div class="a" style="left:1259px;top:909px;width:1px;height:48px;background:#6a6a6a"></div><div class="a" style="left:1283px;top:909px;width:1px;height:48px;background:#5c5c5c"></div><div class="a" style="left:1307px;top:909px;width:1px;height:48px;background:#6a6a6a"></div><div class="a" style="left:1331px;top:909px;width:1px;height:48px;background:#5c5c5c"></div><div class="a" style="left:1355px;top:909px;width:1px;height:48px;background:#6a6a6a"></div><div class="a" style="left:1379px;top:909px;width:1px;height:48px;background:#5c5c5c"></div><div class="a" style="left:1403px;top:909px;width:1px;height:48px;background:#6a6a6a"></div><div class="a" style="left:1427px;top:909px;width:1px;height:48px;background:#5c5c5c"></div><div class="a" style="left:1451px;top:909px;width:1px;height:48px;background:#6a6a6a"></div><div class="a" style="left:1475px;top:909px;width:1px;height:48px;background:#5c5c5c"></div><div class="a" style="left:1499px;top:909px;width:1px;height:48px;background:#414141"></div><div class="a" style="left:1523px;top:909px;width:1px;height:48px;background:#393939"></div><div class="a" style="left:1547px;top:909px;width:1px;height:48px;background:#414141"></div><div class="a" style="left:1571px;top:909px;width:1px;height:48px;background:#393939"></div><div class="a" style="left:1595px;top:909px;width:1px;height:48px;background:#414141"></div><div class="a" style="left:1619px;top:909px;width:1px;height:48px;background:#393939"></div><div class="a" style="left:277px;top:909px;width:1px;height:48px;background:#111"></div><div class="a" style="left:1475px;top:909px;width:1px;height:48px;background:#353535"></div><div class="a" style="left:281px;top:909px;width:3px;height:49px;background:#60c050"></div><div class="a" style="left:0;top:957px;width:1634px;height:18px;background:#737373"></div><div class="a" style="left:4px;top:958px;width:1625px;height:13px;border-radius:6.5px;border:1px solid #3a3a3a;background:linear-gradient(#aaa,#8e8e8e)"></div><div class="a" style="left:8px;top:961px;width:8px;height:8px;border-radius:4px;background:#8a8a8a"></div><div class="t" style="left:32.2px;top:959.7px;color:#000;font-size:10.5px;letter-spacing:0.55px">-50</div><div class="t" style="left:79.8px;top:959.7px;color:#000;font-size:10.5px;letter-spacing:0.55px">-40</div><div class="t" style="left:127.4px;top:959.7px;color:#000;font-size:10.5px;letter-spacing:0.55px">-30</div><div class="t" style="left:175.0px;top:959.7px;color:#000;font-size:10.5px;letter-spacing:0.55px">-20</div><div class="t" style="left:222.6px;top:959.7px;color:#000;font-size:10.5px;letter-spacing:0.55px">-10</div><div class="t" style="left:276.6px;top:959.7px;color:#000;font-size:10.5px;letter-spacing:0.55px">0</div><div class="t" style="left:321.0px;top:959.7px;color:#000;font-size:10.5px;letter-spacing:0.55px">10</div><div class="t" style="left:368.6px;top:959.7px;color:#000;font-size:10.5px;letter-spacing:0.55px">20</div><div class="t" style="left:416.2px;top:959.7px;color:#000;font-size:10.5px;letter-spacing:0.55px">30</div><div class="t" style="left:463.8px;top:959.7px;color:#000;font-size:10.5px;letter-spacing:0.55px">40</div><div class="t" style="left:511.4px;top:959.7px;color:#000;font-size:10.5px;letter-spacing:0.55px">50</div><div class="t" style="left:558.9px;top:959.7px;color:#000;font-size:10.5px;letter-spacing:0.55px">60</div><div class="t" style="left:606.5px;top:959.7px;color:#000;font-size:10.5px;letter-spacing:0.55px">70</div><div class="t" style="left:654.1px;top:959.7px;color:#000;font-size:10.5px;letter-spacing:0.55px">80</div><div class="t" style="left:701.7px;top:959.7px;color:#000;font-size:10.5px;letter-spacing:0.55px">90</div><div class="t" style="left:746.1px;top:959.7px;color:#000;font-size:10.5px;letter-spacing:0.55px">100</div><div class="t" style="left:793.7px;top:959.7px;color:#000;font-size:10.5px;letter-spacing:0.55px">110</div><div class="t" style="left:841.3px;top:959.7px;color:#000;font-size:10.5px;letter-spacing:0.55px">120</div><div class="t" style="left:888.9px;top:959.7px;color:#000;font-size:10.5px;letter-spacing:0.55px">130</div><div class="t" style="left:936.5px;top:959.7px;color:#000;font-size:10.5px;letter-spacing:0.55px">140</div><div class="t" style="left:984.0px;top:959.7px;color:#000;font-size:10.5px;letter-spacing:0.55px">150</div><div class="t" style="left:1031.6px;top:959.7px;color:#000;font-size:10.5px;letter-spacing:0.55px">160</div><div class="t" style="left:1079.2px;top:959.7px;color:#000;font-size:10.5px;letter-spacing:0.55px">170</div><div class="t" style="left:1126.8px;top:959.7px;color:#000;font-size:10.5px;letter-spacing:0.55px">180</div><div class="t" style="left:1174.4px;top:959.7px;color:#000;font-size:10.5px;letter-spacing:0.55px">190</div><div class="t" style="left:1222.0px;top:959.7px;color:#000;font-size:10.5px;letter-spacing:0.55px">200</div><div class="t" style="left:1269.6px;top:959.7px;color:#000;font-size:10.5px;letter-spacing:0.55px">210</div><div class="t" style="left:1317.2px;top:959.7px;color:#000;font-size:10.5px;letter-spacing:0.55px">220</div><div class="t" style="left:1364.8px;top:959.7px;color:#000;font-size:10.5px;letter-spacing:0.55px">230</div><div class="t" style="left:1412.4px;top:959.7px;color:#000;font-size:10.5px;letter-spacing:0.55px">240</div><div class="t" style="left:1460.0px;top:959.7px;color:#000;font-size:10.5px;letter-spacing:0.55px">250</div><div class="t" style="left:1507.5px;top:959.7px;color:#000;font-size:10.5px;letter-spacing:0.55px">260</div><div class="t" style="left:1555.1px;top:959.7px;color:#000;font-size:10.5px;letter-spacing:0.55px">270</div><div class="t" style="left:1602.7px;top:959.7px;color:#000;font-size:10.5px;letter-spacing:0.55px">280</div><svg class="a" style="left:0px;top:896px" width="12" height="12"><path d="M0 1 L11 12 M0 5 L7 12 M0 9 L3 12" stroke="#1e1e1e" stroke-width="1.2"/><path d="M0 2.2 L9.8 12 M0 6.2 L5.8 12 M0 10.2 L1.8 12" stroke="#a8a8a8" stroke-width="0.9"/></svg><svg class="a" style="left:1620px;top:909px" width="14" height="14"><path d="M2 0 L14 12 M6 0 L14 8 M10 0 L14 4" stroke="#1e1e1e" stroke-width="1.2"/><path d="M0.8 0 L14 13.2 M4.8 0 L14 9.2 M8.8 0 L14 5.2" stroke="#a8a8a8" stroke-width="0.9"/></svg><div class="hdr" style="left:0;top:975px;width:1634px;height:26px;border-top:1px solid #858585"></div><div class="a" style="left:9px;top:978px;width:30px;height:20px;border-radius:4px;background:linear-gradient(#4a4a4a,#3e3e3e);border:1px solid #2a2a2a"></div><svg class="a" style="left:14px;top:981px" width="14" height="14"><circle cx="7" cy="7" r="6" fill="#eee" stroke="#111" stroke-width="1.2"/><path d="M8.5 3.5 L5 7 L8 10.5" stroke="#5a1a2a" stroke-width="1.2" fill="none"/></svg><svg class="a" style="left:28.0px;top:981.0px" width="8" height="14"><path d="M4 1.5 L7 5.5 L1 5.5Z M4 12.5 L7 8.5 L1 8.5Z" fill="#b8b8b8"/></svg><div class="t" style="left:51.3px;top:983.7px;color:#000;font-size:11px;">View</div><div class="t" style="left:96.6px;top:983.7px;color:#000;font-size:11px;">Marker</div><div class="t" style="left:151.3px;top:983.7px;color:#000;font-size:11px;">Frame</div><div class="t" style="left:203.4px;top:983.7px;color:#000;font-size:11px;">Playback</div><div class="a" style="left:261px;top:978px;width:39px;height:20px;border-radius:4px;border:1px solid #303030;overflow:hidden"><div class="a" style="left:0px;top:0;width:19px;height:18px;background:linear-gradient(#a6a6a6,#8c8c8c);"></div><div class="a" style="left:19px;top:0;width:20px;height:18px;background:linear-gradient(#a6a6a6,#8c8c8c);border-left:1px solid #3a3a3a"></div></div><svg class="a" style="left:263px;top:981px" width="14" height="14"><circle cx="7" cy="7" r="6" fill="#eee" stroke="#111" stroke-width="1.1"/><path d="M7 7 V1.2 A5.8 5.8 0 0 1 12.8 7Z" fill="#f0b020"/></svg><svg class="a" style="left:283px;top:980px" width="14" height="16"><path d="M4 7 V4.5 A3 3 0 0 1 10 4.5 V7" stroke="#111" stroke-width="2.6" fill="none"/><path d="M4 7 V4.5 A3 3 0 0 1 10 4.5 V7" stroke="#eee" stroke-width="1.2" fill="none"/><rect x="2.5" y="7" width="9" height="7" fill="#eee" stroke="#111"/></svg><div class="a" style="left:307px;top:978px;width:226px;height:20px;border-radius:10px;border:1px solid #3a3a3a;overflow:hidden;background:linear-gradient(#9c9c9c,#b4b4b4)"><div class="a" style="left:115px;top:0;width:1px;height:18px;background:#222"></div></div><div class="a" style="left:539px;top:978px;width:90px;height:20px;border-radius:10px;border:1px solid #3a3a3a;background:linear-gradient(#9c9c9c,#b4b4b4)"></div><svg class="a" style="left:314px;top:984px" width="6" height="8"><path d="M5 0 L1 4 L5 8Z" fill="#7a7a7a"/></svg><svg class="a" style="left:429px;top:984px" width="6" height="8"><path d="M5 0 L1 4 L5 8Z" fill="#7a7a7a"/></svg><svg class="a" style="left:546px;top:984px" width="6" height="8"><path d="M5 0 L1 4 L5 8Z" fill="#7a7a7a"/></svg><svg class="a" style="left:413px;top:984px" width="6" height="8"><path d="M1 0 L5 4 L1 8Z" fill="#7a7a7a"/></svg><svg class="a" style="left:523px;top:984px" width="6" height="8"><path d="M1 0 L5 4 L1 8Z" fill="#7a7a7a"/></svg><svg class="a" style="left:619px;top:984px" width="6" height="8"><path d="M1 0 L5 4 L1 8Z" fill="#7a7a7a"/></svg><div class="t" style="left:322.0px;top:983.7px;color:#000;font-size:11px;">Start:</div><div class="t" style="left:400.0px;top:983.7px;color:#000;font-size:11px;">1</div><div class="t" style="left:438.0px;top:983.7px;color:#000;font-size:11px;">End:</div><div class="t" style="left:497.0px;top:983.7px;color:#000;font-size:11px;">250</div><div class="t" style="left:606.0px;top:983.7px;color:#000;font-size:11px;">1</div><div class="a" style="left:645px;top:978px;width:119px;height:20px;border-radius:4px;border:1px solid #303030;overflow:hidden"><div class="a" style="left:0px;top:0;width:20px;height:18px;background:linear-gradient(#a6a6a6,#8c8c8c);"></div><div class="a" style="left:20px;top:0;width:20px;height:18px;background:linear-gradient(#a6a6a6,#8c8c8c);border-left:1px solid #3a3a3a"></div><div class="a" style="left:40px;top:0;width:20px;height:18px;background:linear-gradient(#a6a6a6,#8c8c8c);border-left:1px solid #3a3a3a"></div><div class="a" style="left:60px;top:0;width:20px;height:18px;background:linear-gradient(#a6a6a6,#8c8c8c);border-left:1px solid #3a3a3a"></div><div class="a" style="left:80px;top:0;width:20px;height:18px;background:linear-gradient(#a6a6a6,#8c8c8c);border-left:1px solid #3a3a3a"></div><div class="a" style="left:100px;top:0;width:19px;height:18px;background:linear-gradient(#a6a6a6,#8c8c8c);border-left:1px solid #3a3a3a"></div></div><svg class="a" style="left:647px;top:980px" width="16" height="16"><path d="M3 3 V13 M13 3 L7 8 L13 13Z M8 3 L3 8 L8 13" stroke="#111" stroke-width="2.6" fill="none" stroke-linejoin="round"/><path d="M3 3 V13 M13 3 L7 8 L13 13Z M8 3 L3 8 L8 13" fill="#eee" stroke="#eee" stroke-width="0.6"/></svg><svg class="a" style="left:667px;top:980px" width="16" height="16"><path d="M8 3 L3 8 L8 13Z M13 3 L8 8 L13 13Z" stroke="#111" stroke-width="2.6" fill="none" stroke-linejoin="round"/><path d="M8 3 L3 8 L8 13Z M13 3 L8 8 L13 13Z" fill="#eee" stroke="#eee" stroke-width="0.6"/></svg><svg class="a" style="left:687px;top:980px" width="16" height="16"><path d="M12 2 L4 8 L12 14Z" stroke="#111" stroke-width="2.6" fill="none" stroke-linejoin="round"/><path d="M12 2 L4 8 L12 14Z" fill="#eee" stroke="#eee" stroke-width="0.6"/></svg><svg class="a" style="left:707px;top:980px" width="16" height="16"><path d="M4 2 L12 8 L4 14Z" stroke="#111" stroke-width="2.6" fill="none" stroke-linejoin="round"/><path d="M4 2 L12 8 L4 14Z" fill="#eee" stroke="#eee" stroke-width="0.6"/></svg><svg class="a" style="left:727px;top:980px" width="16" height="16"><path d="M3 3 L8 8 L3 13Z M8 3 L13 8 L8 13Z" stroke="#111" stroke-width="2.6" fill="none" stroke-linejoin="round"/><path d="M3 3 L8 8 L3 13Z M8 3 L13 8 L8 13Z" fill="#eee" stroke="#eee" stroke-width="0.6"/></svg><svg class="a" style="left:747px;top:980px" width="16" height="16"><path d="M13 3 V13 M3 3 L8 8 L3 13Z M8 3 L13 8 L8 13" stroke="#111" stroke-width="2.6" fill="none" stroke-linejoin="round"/><path d="M13 3 V13 M3 3 L8 8 L3 13Z M8 3 L13 8 L8 13" fill="#eee" stroke="#eee" stroke-width="0.6"/></svg><div class="wmenu" style="left:771px;top:978px;width:114px;height:20px"></div><div class="t" style="left:778.0px;top:983.7px;color:#fff;font-size:11px;">No Sync</div><svg class="a" style="left:873.0px;top:981.0px" width="8" height="14"><path d="M4 1.5 L7 5.5 L1 5.5Z M4 12.5 L7 8.5 L1 8.5Z" fill="#c8c8c8"/></svg><div class="a" style="left:902px;top:978px;width:18px;height:20px;border-radius:4px;border:1px solid #303030;overflow:hidden"><div class="a" style="left:0px;top:0;width:18px;height:18px;background:linear-gradient(#a6a6a6,#8c8c8c);"></div></div><svg class="a" style="left:904px;top:981px" width="14" height="14"><circle cx="7" cy="7" r="4.5" fill="#e03a1a" stroke="#3a1a10" stroke-width="1"/></svg><div class="wmenu" style="left:926px;top:978px;width:35px;height:20px"></div><svg class="a" style="left:930px;top:982px" width="12" height="12"><path d="M6 1 L11 6 L6 11 L1 6Z" fill="#f8b030" stroke="#222" stroke-width="0.8"/></svg><svg class="a" style="left:949.0px;top:981.0px" width="8" height="14"><path d="M4 1.5 L7 5.5 L1 5.5Z M4 12.5 L7 8.5 L1 8.5Z" fill="#c8c8c8"/></svg><div class="a" style="left:967px;top:978px;width:170px;height:20px;border-radius:4px;border:1px solid #3a3a3a;overflow:hidden;background:linear-gradient(#9c9c9c,#b6b6b6)"><div class="a" style="left:128px;top:0;width:21px;height:18px;background:linear-gradient(#a6a6a6,#8c8c8c);border-left:1px solid #3a3a3a"></div><div class="a" style="left:149px;top:0;width:21px;height:18px;background:linear-gradient(#a6a6a6,#8c8c8c);border-left:1px solid #3a3a3a"></div></div><svg class="a" style="left:969px;top:980px" width="16" height="16"><path d="M4 1 V10 M4 3 H6" stroke="#111" stroke-width="2.4"/><path d="M4 1 V10 M4 3 H6" stroke="#e8d890" stroke-width="1.2"/><circle cx="5" cy="12" r="2.3" fill="none" stroke="#e8d890" stroke-width="1.2"/><path d="M7 11 L13 6" stroke="#ddd" stroke-width="1.3"/></svg><svg class="a" style="left:1098px;top:980px" width="16" height="16"><circle cx="5" cy="11" r="2.5" fill="none" stroke="#eee" stroke-width="1.3"/><path d="M7 9 L13 3" stroke="#eee" stroke-width="1.5"/></svg><svg class="a" style="left:1119px;top:980px" width="16" height="16"><circle cx="5" cy="11" r="2.5" fill="none" stroke="#eee" stroke-width="1.3"/><path d="M7 9 L13 3" stroke="#eee" stroke-width="1.5"/><path d="M2 2 L14 14 M14 2 L2 14" stroke="#d03030" stroke-width="1.6"/></svg><svg class="a" style="left:0px;top:989px" width="12" height="12"><path d="M0 1 L11 12 M0 5 L7 12 M0 9 L3 12" stroke="#1e1e1e" stroke-width="1.2"/><path d="M0 2.2 L9.8 12 M0 6.2 L5.8 12 M0 10.2 L1.8 12" stroke="#a8a8a8" stroke-width="0.9"/></svg><div class="a" style="left:1634px;top:26px;width:1px;height:975px;background:#000"></div><div class="a" style="left:1635px;top:27px;width:269px;height:169px;background:#727272"></div><div class="hdr" style="left:1635px;top:27px;width:269px;height:26px;border-top:1px solid #858585;border-bottom:1px solid #5e5e5e"></div><div class="a" style="left:1644px;top:30px;width:30px;height:20px;border-radius:4px;background:linear-gradient(#4a4a4a,#3e3e3e);border:1px solid #2a2a2a"></div><svg class="a" style="left:1648px;top:33px" width="16" height="14"><rect x="1" y="1" width="6" height="3" fill="#f0c070" stroke="#222" stroke-width="0.8"/><path d="M3 4 V12 M3 8 H7 M3 12 H7" stroke="#ddd" stroke-width="1"/><rect x="7" y="6.5" width="6" height="3" fill="#eee" stroke="#222" stroke-width="0.8"/><rect x="7" y="10.5" width="6" height="3" fill="#eee" stroke="#222" stroke-width="0.8"/></svg><svg class="a" style="left:1663.0px;top:33.0px" width="8" height="14"><path d="M4 1.5 L7 5.5 L1 5.5Z M4 12.5 L7 8.5 L1 8.5Z" fill="#b8b8b8"/></svg><div class="t" style="left:1685.9px;top:35.7px;color:#000;font-size:11px;">View</div><div class="t" style="left:1731.0px;top:35.7px;color:#000;font-size:11px;">Search</div><div class="wmenu" style="left:1778px;top:30px;width:119px;height:20px"></div><div class="t" style="left:1786.2px;top:35.7px;color:#fff;font-size:11px;">All Scenes</div><svg class="a" style="left:1886.0px;top:33.0px" width="8" height="14"><path d="M4 1.5 L7 5.5 L1 5.5Z M4 12.5 L7 8.5 L1 8.5Z" fill="#c8c8c8"/></svg><svg class="a" style="left:1890px;top:27px" width="14" height="14"><path d="M2 0 L14 12 M6 0 L14 8 M10 0 L14 4" stroke="#1e1e1e" stroke-width="1.2"/><path d="M0.8 0 L14 13.2 M4.8 0 L14 9.2 M8.8 0 L14 5.2" stroke="#a8a8a8" stroke-width="0.9"/></svg><div class="a" style="left:1635px;top:54px;width:269px;height:20px;background:#717171"></div><div class="a" style="left:1635px;top:74px;width:269px;height:20px;background:#797979"></div><div class="a" style="left:1635px;top:94px;width:269px;height:20px;background:#717171"></div><div class="a" style="left:1635px;top:114px;width:269px;height:20px;background:#797979"></div><div class="a" style="left:1635px;top:134px;width:269px;height:20px;background:#717171"></div><div class="a" style="left:1635px;top:154px;width:269px;height:20px;background:#797979"></div><div class="a" style="left:1635px;top:174px;width:269px;height:5px;background:#717171"></div><div class="a" style="left:1845px;top:53px;width:1px;height:126px;background:#666"></div><div class="a" style="left:1864px;top:53px;width:1px;height:126px;background:#666"></div><div class="a" style="left:1884px;top:53px;width:1px;height:126px;background:#666"></div><div class="a" style="left:1661px;top:73px;width:1px;height:72px;background:#3a3a3a"></div><div class="a" style="left:1647px;top:63px;width:9px;height:1px;background:#3a3a3a"></div><svg class="a" style="left:1636px;top:56px" width="13" height="13"><circle cx="6.5" cy="6.5" r="4.5" fill="#e8e8e8" stroke="#1a1a1a" stroke-width="1"/><path d="M4 6.5 H9" stroke="#111" stroke-width="1.2"/></svg><svg class="a" style="left:1654px;top:54px" width="20" height="20"><circle cx="10" cy="10" r="9" fill="#9a9a9a" opacity="0.55"/></svg><svg class="a" style="left:1656px;top:56px" width="16" height="16"><defs><radialGradient id="sg1656_56"><stop offset="0" stop-color="#fbffb0"/><stop offset="0.4" stop-color="#d8d870" stop-opacity="0.8"/><stop offset="1" stop-color="#a0a040" stop-opacity="0"/></radialGradient><linearGradient id="cg1656_56" x1="0" y1="0" x2="0" y2="1"><stop offset="0" stop-color="#e8f0ff"/><stop offset="0.45" stop-color="#a8c0f0"/><stop offset="1" stop-color="#4a70c8"/></linearGradient></defs><circle cx="3.5" cy="4" r="3.4" fill="url(#sg1656_56)"/><rect x="8" y="2.5" width="6" height="9.8" rx="1.8" fill="url(#cg1656_56)" stroke="#101830" stroke-width="1"/><circle cx="6" cy="12" r="3.6" fill="#e4e4e4" stroke="#111" stroke-width="1"/></svg><div class="t" style="left:1675.3px;top:59.7px;color:#000;font-size:11px;">Scene</div><svg class="a" style="left:1660px;top:77px" width="13" height="13"><circle cx="6.5" cy="6.5" r="4.5" fill="#e8e8e8" stroke="#1a1a1a" stroke-width="1"/><path d="M4 6.5 H9 M6.5 4 V9" stroke="#111" stroke-width="1.2"/></svg><svg class="a" style="left:1675px;top:75px" width="16" height="16"><rect x="4" y="4" width="10" height="10" fill="#e8e0c0" stroke="#222" stroke-width="0.8"/><rect x="2.5" y="2.5" width="10" height="10" fill="#f0f0f0" stroke="#222" stroke-width="0.8"/><rect x="3.5" y="3.5" width="8" height="8" fill="#cfe0ff"/><path d="M6 10 L8 5 L9 10" stroke="#3a5ad8" stroke-width="1.4" fill="none"/></svg><div class="t" style="left:1695.0px;top:79.7px;color:#000;font-size:11px;">RenderLayers</div><div class="a" style="left:1773px;top:77px;width:2px;height:12px;background:#555"></div><svg class="a" style="left:1782px;top:74px" width="19" height="19"><circle cx="9.5" cy="9.5" r="9" fill="#8a8a8a" opacity="0.5"/></svg><svg class="a" style="left:1783px;top:75px" width="16" height="16"><rect x="4" y="4" width="10" height="10" fill="#e8e0c0" stroke="#222" stroke-width="0.8"/><rect x="2.5" y="2.5" width="10" height="10" fill="#f0f0f0" stroke="#222" stroke-width="0.8"/><rect x="3.5" y="3.5" width="8" height="8" fill="#cfe0ff"/><path d="M6 10 L8 5 L9 10" stroke="#3a5ad8" stroke-width="1.4" fill="none"/></svg><svg class="a" style="left:1675px;top:94px" width="18" height="18"><circle cx="9" cy="9" r="8.5" fill="#a0a8b8" opacity="0.45"/><circle cx="9" cy="9" r="6.3" fill="#2e5aa0" stroke="#101828" stroke-width="1"/><path d="M5 6.5 Q7.5 4.5 9 7 Q7.5 9.5 9.5 12 Q6 13.5 4 10.5Z M11 5 Q13.8 7 13.2 10.5 Q11 9.5 11 5" fill="#4a9a4a"/><circle cx="7" cy="6" r="2.5" fill="#fff" opacity="0.25"/></svg><div class="t" style="left:1695.0px;top:99.7px;color:#000;font-size:11px;">World</div><svg class="a" style="left:1656px;top:117px" width="13" height="13"><circle cx="6.5" cy="6.5" r="4.5" fill="#e8e8e8" stroke="#1a1a1a" stroke-width="1"/><path d="M4 6.5 H9 M6.5 4 V9" stroke="#111" stroke-width="1.2"/></svg><div class="a" style="left:1667px;top:123px;width:8px;height:1px;background:#3a3a3a"></div><svg class="a" style="left:1676px;top:115px" width="16" height="16"><circle cx="5" cy="4.5" r="3" fill="#f0b050" stroke="#3a2000" stroke-width="0.9"/><circle cx="11" cy="4.5" r="3" fill="#f0b050" stroke="#3a2000" stroke-width="0.9"/><rect x="3" y="8" width="9" height="6" fill="#f0a040" stroke="#3a2000" stroke-width="0.9"/><path d="M12 9 L15 8 V14 L12 13Z" fill="#f0a040" stroke="#3a2000" stroke-width="0.8"/></svg><div class="t" style="left:1695.0px;top:119.7px;color:#000;font-size:11px;">Camera</div><div class="a" style="left:1744px;top:117px;width:2px;height:12px;background:#555"></div><svg class="a" style="left:1752px;top:114px" width="19" height="19"><circle cx="9.5" cy="9.5" r="9" fill="#8a8a8a" opacity="0.6"/><circle cx="7" cy="7" r="3" fill="none" stroke="#999" stroke-width="1.2"/><circle cx="12" cy="7" r="3" fill="none" stroke="#999" stroke-width="1.2"/><rect x="5" y="10" width="8" height="5" fill="none" stroke="#999" stroke-width="1.2"/></svg><svg class="a" style="left:1656px;top:137px" width="13" height="13"><circle cx="6.5" cy="6.5" r="4.5" fill="#e8e8e8" stroke="#1a1a1a" stroke-width="1"/><path d="M4 6.5 H9 M6.5 4 V9" stroke="#111" stroke-width="1.2"/></svg><div class="a" style="left:1667px;top:143px;width:8px;height:1px;background:#3a3a3a"></div><svg class="a" style="left:1674px;top:134px" width="19" height="19"><circle cx="9.5" cy="9.5" r="9" fill="#c09060" opacity="0.5"/><path d="M4.5 4.5 L14.5 4.5 L9.5 14.5Z" fill="none" stroke="#111" stroke-width="2.6"/><path d="M4.5 4.5 L14.5 4.5 L9.5 14.5Z" fill="none" stroke="#f0a040" stroke-width="1.3"/><circle cx="4.5" cy="4.5" r="1.5" fill="#fff" stroke="#111" stroke-width="0.6"/><circle cx="14.5" cy="4.5" r="1.5" fill="#fff" stroke="#111" stroke-width="0.6"/><circle cx="9.5" cy="14.5" r="1.5" fill="#fff" stroke="#111" stroke-width="0.6"/></svg><div class="t" style="left:1695.0px;top:139.7px;color:#fff;font-size:11px;">Schild</div><div class="a" style="left:1734px;top:137px;width:2px;height:12px;background:#555"></div><svg class="a" style="left:1745px;top:136px" width="16" height="16"><path d="M2.5 3 L13.5 3 L8 14Z" fill="none" stroke="#555" stroke-width="1"/><circle cx="2.5" cy="3" r="1.4" fill="#ddd" stroke="#444" stroke-width="0.6"/><circle cx="13.5" cy="3" r="1.4" fill="#ddd" stroke="#444" stroke-width="0.6"/><circle cx="8" cy="14" r="1.4" fill="#ddd" stroke="#444" stroke-width="0.6"/></svg><svg class="a" style="left:1766px;top:135px" width="16" height="16"><path d="M2.5 13.5 L8.5 7.5" stroke="#1a2a50" stroke-width="4" stroke-linecap="round"/><path d="M14.2 4.2 A3.6 3.6 0 1 1 11.8 1.8" stroke="#1a2a50" stroke-width="3.6" fill="none"/><path d="M2.5 13.5 L8.5 7.5" stroke="#6a9ae8" stroke-width="2" stroke-linecap="round"/><path d="M14.2 4.2 A3.6 3.6 0 1 1 11.8 1.8" stroke="#6a9ae8" stroke-width="1.8" fill="none"/></svg><svg class="a" style="left:1846px;top:117px" width="18" height="12"><path d="M1 6 Q9 -1 17 6 Q9 13 1 6Z" fill="#eee" stroke="#222" stroke-width="0.9"/><circle cx="9" cy="6" r="2.4" fill="#222"/></svg><svg class="a" style="left:1869px;top:116px" width="12" height="14"><path d="M2 1 L2 11 L4.5 8.5 L7 13 L8.5 12 L6.5 8 L10 8Z" fill="#eee" stroke="#111" stroke-width="1"/></svg><svg class="a" style="left:1887px;top:116px" width="16" height="14"><rect x="1" y="3" width="13" height="10" rx="1" fill="#ddd" stroke="#111" stroke-width="1"/><circle cx="7.5" cy="8" r="3" fill="#7a5a5a" stroke="#111" stroke-width="0.8"/></svg><svg class="a" style="left:1846px;top:137px" width="18" height="12"><path d="M1 6 Q9 -1 17 6 Q9 13 1 6Z" fill="#eee" stroke="#222" stroke-width="0.9"/><circle cx="9" cy="6" r="2.4" fill="#222"/></svg><svg class="a" style="left:1869px;top:136px" width="12" height="14"><path d="M2 1 L2 11 L4.5 8.5 L7 13 L8.5 12 L6.5 8 L10 8Z" fill="#eee" stroke="#111" stroke-width="1"/></svg><svg class="a" style="left:1887px;top:136px" width="16" height="14"><rect x="1" y="3" width="13" height="10" rx="1" fill="#ddd" stroke="#111" stroke-width="1"/><circle cx="7.5" cy="8" r="3" fill="#7a5a5a" stroke="#111" stroke-width="0.8"/></svg><div class="a" style="left:1638px;top:179px;width:262px;height:13px;border-radius:6px;background:#5e5e5e"></div><div class="a" style="left:1639px;top:179px;width:234px;height:12px;border-radius:6px;border:1px solid #555;background:linear-gradient(#9a9a9a,#7e7e7e)"></div><div class="a" style="left:1635px;top:196px;width:269px;height:1px;background:#000"></div><svg class="a" style="left:1635px;top:184px" width="12" height="12"><path d="M0 1 L11 12 M0 5 L7 12 M0 9 L3 12" stroke="#1e1e1e" stroke-width="1.2"/><path d="M0 2.2 L9.8 12 M0 6.2 L5.8 12 M0 10.2 L1.8 12" stroke="#a8a8a8" stroke-width="0.9"/></svg><div class="a" style="left:1635px;top:197px;width:269px;height:804px;background:#727272"></div><div class="hdr" style="left:1635px;top:197px;width:269px;height:26px;border-top:1px solid #858585;border-bottom:1px solid #5e5e5e"></div><div class="a" style="left:1644px;top:200px;width:30px;height:20px;border-radius:4px;background:linear-gradient(#4a4a4a,#3e3e3e);border:1px solid #2a2a2a"></div><svg class="a" style="left:1649px;top:203px" width="16" height="14"><rect x="1" y="1.5" width="11" height="4.5" rx="2" fill="#555" stroke="#111" stroke-width="0.8"/><rect x="8" y="2" width="4" height="3.5" fill="#eee"/><rect x="1" y="8" width="11" height="4.5" rx="2" fill="#eee" stroke="#111" stroke-width="0.8"/><path d="M3 10.2 L4.5 9 V11.5Z M10 10.2 L8.5 9 V11.5Z" fill="#111"/></svg><svg class="a" style="left:1663.0px;top:203.0px" width="8" height="14"><path d="M4 1.5 L7 5.5 L1 5.5Z M4 12.5 L7 8.5 L1 8.5Z" fill="#b8b8b8"/></svg><div class="a" style="left:1682px;top:200px;width:230px;height:20px;border-radius:4px;border:1px solid #2a2a2a;overflow:hidden;background:linear-gradient(#585858,#3c3c3c)"><div class="a" style="left:178px;top:0;width:20px;height:18px;background:linear-gradient(#6a94d6,#4a76bb)"></div><div class="a" style="left:18px;top:0;width:1px;height:18px;background:#222"></div><div class="a" style="left:38px;top:0;width:1px;height:18px;background:#222"></div><div class="a" style="left:58px;top:0;width:1px;height:18px;background:#222"></div><div class="a" style="left:78px;top:0;width:1px;height:18px;background:#222"></div><div class="a" style="left:98px;top:0;width:1px;height:18px;background:#222"></div><div class="a" style="left:118px;top:0;width:1px;height:18px;background:#222"></div><div class="a" style="left:138px;top:0;width:1px;height:18px;background:#222"></div><div class="a" style="left:158px;top:0;width:1px;height:18px;background:#222"></div><div class="a" style="left:178px;top:0;width:1px;height:18px;background:#222"></div><div class="a" style="left:198px;top:0;width:1px;height:18px;background:#222"></div><div class="a" style="left:218px;top:0;width:1px;height:18px;background:#222"></div></div><svg class="a" style="left:1684px;top:202px" width="16" height="16"><rect x="2" y="5" width="13" height="9" rx="1" fill="#9a9a9a" stroke="#222" stroke-width="0.9"/><circle cx="8.5" cy="9.5" r="3" fill="#555" stroke="#222" stroke-width="0.8"/><rect x="3" y="3" width="4" height="2" fill="#9a9a9a"/></svg><svg class="a" style="left:1704px;top:202px" width="16" height="16"><rect x="5" y="5" width="10" height="10" fill="#9a9a8a" stroke="#222" stroke-width="0.8"/><rect x="2" y="2" width="10" height="10" fill="#aaa" stroke="#222" stroke-width="0.8"/><path d="M5 9 L7 4 L8 9" stroke="#3a5aa8" stroke-width="1.3" fill="none"/></svg><svg class="a" style="left:1724px;top:202px" width="16" height="16"><circle cx="4" cy="3" r="1.8" fill="#c8c870" opacity="0.8"/><rect x="9" y="3" width="5" height="9" rx="2" fill="#6a85b8" stroke="#222" stroke-width="0.7"/><circle cx="6" cy="12" r="3.3" fill="#aaa" stroke="#222" stroke-width="0.7"/></svg><svg class="a" style="left:1744px;top:202px" width="16" height="16"><circle cx="8" cy="8.5" r="6.2" fill="#6f8496" stroke="#2a3038" stroke-width="0.8"/><path d="M4.5 5.5 Q7 4 8.5 6.5 Q6.5 9 9 11.5 Q5.5 13 3.5 9.5Z M10 4.5 Q13 6 12.5 9.5 Q10.5 8.5 10 4.5" fill="#8a9a96"/></svg><svg class="a" style="left:1764px;top:202px" width="16" height="16"><path d="M8 2 L14 4.5 L14 11.5 L8 14.5 L2 11.5 L2 4.5Z" fill="#c89a5a" stroke="#222" stroke-width="0.8"/><path d="M8 7 L14 4.5 V11.5 L8 14.5Z" fill="#9a7040"/></svg><svg class="a" style="left:1784px;top:202px" width="16" height="16"><rect x="1.5" y="7" width="8" height="4.5" rx="2.25" transform="rotate(-45 5.5 9.25)" stroke="#a8a8a8" stroke-width="1.5" fill="none"/><rect x="6.5" y="3.5" width="8" height="4.5" rx="2.25" transform="rotate(-45 10.5 5.75)" stroke="#a8a8a8" stroke-width="1.5" fill="none"/></svg><svg class="a" style="left:1804px;top:202px" width="16" height="16"><path d="M2.5 13.5 L8.5 7.5" stroke="#8aa2c8" stroke-width="2.4" stroke-linecap="round"/><path d="M14.2 4.2 A3.6 3.6 0 1 1 11.8 1.8" stroke="#8aa2c8" stroke-width="2.2" fill="none"/></svg><svg class="a" style="left:1824px;top:202px" width="16" height="16"><path d="M2 3 L14 3 L8 14Z" fill="none" stroke="#aaa" stroke-width="1"/><circle cx="2" cy="3" r="1.4" fill="#ddd"/><circle cx="14" cy="3" r="1.4" fill="#ddd"/><circle cx="8" cy="14" r="1.4" fill="#ddd"/></svg><svg class="a" style="left:1844px;top:202px" width="16" height="16"><circle cx="8" cy="8.5" r="6" fill="#7a6a6a" stroke="#222" stroke-width="0.8"/><path d="M8 2.5 A6 6 0 0 0 2 8.5 L8 8.5Z" fill="#9a9090"/></svg><svg class="a" style="left:1866px;top:203px" width="14" height="14"><rect x="0.5" y="0.5" width="13" height="13" fill="#fdf4f4" stroke="#111" stroke-width="1"/><rect x="1.30" y="1.30" width="2.40" height="2.40" fill="#3a0202"/><rect x="7.30" y="1.30" width="2.40" height="2.40" fill="#4a0808"/><rect x="4.30" y="4.30" width="2.40" height="2.40" fill="#4a0808"/><rect x="10.30" y="4.30" width="2.40" height="2.40" fill="#5a1a1a"/><rect x="1.30" y="7.30" width="2.40" height="2.40" fill="#4a0808"/><rect x="7.30" y="7.30" width="2.40" height="2.40" fill="#5a1a1a"/><rect x="4.30" y="10.30" width="2.40" height="2.40" fill="#5a1a1a"/><rect x="10.30" y="10.30" width="2.40" height="2.40" fill="#7a4a4a"/></svg><svg class="a" style="left:1884px;top:202px" width="16" height="16"><path d="M4.5 1 Q5 4 8 4.5 Q5 5 4.5 8 Q4 5 1 4.5 Q4 4 4.5 1Z M12 5 Q12.4 7.6 15 8 Q12.4 8.4 12 11 Q11.6 8.4 9 8 Q11.6 7.6 12 5Z M6 9 Q6.4 11.6 9 12 Q6.4 12.4 6 15 Q5.6 12.4 3 12 Q5.6 11.6 6 9Z" fill="#d8d0a8"/></svg><svg class="a" style="left:1890px;top:197px" width="14" height="14"><path d="M2 0 L14 12 M6 0 L14 8 M10 0 L14 4" stroke="#1e1e1e" stroke-width="1.2"/><path d="M0.8 0 L14 13.2 M4.8 0 L14 9.2 M8.8 0 L14 5.2" stroke="#a8a8a8" stroke-width="0.9"/></svg><div class="a" style="left:1888px;top:228px;width:11px;height:768px;border-radius:6px;background:#676767"></div><div class="a" style="left:1888px;top:228px;width:11px;height:556px;border-radius:6px;border:1px solid #5e5e5e;background:linear-gradient(90deg,#8a8a8a,#9c9c9c,#8a8a8a)"></div><svg class="a" style="left:1645px;top:233px" width="16" height="16"><path d="M2 14 L7 9" stroke="#111" stroke-width="2.4"/><path d="M2 14 L7 9" stroke="#eee" stroke-width="1"/><path d="M5 7 L9 11 L12 8 L10 6 L13 3 L11 1 L8 4 L6 2Z" fill="#eee" stroke="#111" stroke-width="0.9"/></svg><svg class="a" style="left:1667px;top:233px" width="16" height="16"><defs><radialGradient id="sg1667_233"><stop offset="0" stop-color="#fbffb0"/><stop offset="0.4" stop-color="#d8d870" stop-opacity="0.8"/><stop offset="1" stop-color="#a0a040" stop-opacity="0"/></radialGradient><linearGradient id="cg1667_233" x1="0" y1="0" x2="0" y2="1"><stop offset="0" stop-color="#e8f0ff"/><stop offset="0.45" stop-color="#a8c0f0"/><stop offset="1" stop-color="#4a70c8"/></linearGradient></defs><circle cx="3.5" cy="4" r="3.4" fill="url(#sg1667_233)"/><rect x="8" y="2.5" width="6" height="9.8" rx="1.8" fill="url(#cg1667_233)" stroke="#101830" stroke-width="1"/><circle cx="6" cy="12" r="3.6" fill="#e4e4e4" stroke="#111" stroke-width="1"/></svg><svg class="a" style="left:1689px;top:237px" width="5" height="8"><path d="M0.5 0.5 L4 4 L0.5 7.5Z" fill="#333"/></svg><svg class="a" style="left:1756px;top:237px" width="5" height="8"><path d="M0.5 0.5 L4 4 L0.5 7.5Z" fill="#333"/></svg><svg class="a" style="left:1824px;top:237px" width="5" height="8"><path d="M0.5 0.5 L4 4 L0.5 7.5Z" fill="#333"/></svg><svg class="a" style="left:1708px;top:234px" width="15" height="15" viewBox="0 0 14 14"><path d="M7 1 L12.5 3.5 L12.5 10 L7 13 L1.5 10 L1.5 3.5Z" fill="#f8c070" stroke="#2a1a00" stroke-width="0.9"/><path d="M7 6 L12.5 3.5 L12.5 10 L7 13Z" fill="#d89040"/><path d="M1.5 3.5 L7 6 L12.5 3.5" stroke="#fff3d0" stroke-width="0.7" fill="none"/></svg><div class="t" style="left:1726.5px;top:236.2px;color:#000;font-size:11px;">Schil</div><svg class="a" style="left:1775px;top:234px" width="14" height="14" viewBox="0 0 14 14"><circle cx="7" cy="7" r="6.2" fill="#6a4a4a" stroke="#1a1a1a" stroke-width="0.9"/><path d="M7 1 A6 6 0 0 0 1 7 L7 7Z M7 7 L13 7 A6 6 0 0 1 7 13Z" fill="#f0e6e6"/><path d="M7 7 L13 7 A6 6 0 0 0 7 1Z" fill="#c07060"/></svg><div class="t" style="left:1793.0px;top:236.2px;color:#000;font-size:11px;">diffu</div><svg class="a" style="left:1843px;top:234px" width="14" height="14"><rect x="0.5" y="0.5" width="13" height="13" fill="#fdf4f4" stroke="#111" stroke-width="1"/><rect x="1.30" y="1.30" width="2.40" height="2.40" fill="#3a0202"/><rect x="7.30" y="1.30" width="2.40" height="2.40" fill="#4a0808"/><rect x="4.30" y="4.30" width="2.40" height="2.40" fill="#4a0808"/><rect x="10.30" y="4.30" width="2.40" height="2.40" fill="#5a1a1a"/><rect x="1.30" y="7.30" width="2.40" height="2.40" fill="#4a0808"/><rect x="7.30" y="7.30" width="2.40" height="2.40" fill="#5a1a1a"/><rect x="4.30" y="10.30" width="2.40" height="2.40" fill="#5a1a1a"/><rect x="10.30" y="10.30" width="2.40" height="2.40" fill="#7a4a4a"/></svg><div class="t" style="left:1861.0px;top:236.2px;color:#000;font-size:11px;">Tex</div><div class="a" style="left:1643px;top:267px;width:60px;height:20px;border-radius:4px;border:1px solid #2a2a2a;overflow:hidden;background:linear-gradient(#585858,#3c3c3c)"><div class="a" style="left:19px;top:0;width:20px;height:18px;background:linear-gradient(#6a94d6,#4a76bb)"></div><div class="a" style="left:39px;top:0;width:1px;height:18px;background:#2a2a2a"></div></div><svg class="a" style="left:1645px;top:269px" width="16" height="16"><circle cx="8" cy="8" r="6" fill="#5a7a8a" stroke="#222" stroke-width="0.8"/><path d="M5 6 Q8 4 9 7 Q7 10 10 12 Q6 13 4 10Z" fill="#6a8a6a"/></svg><svg class="a" style="left:1664px;top:270px" width="15" height="15" viewBox="0 0 14 14"><circle cx="7" cy="7" r="6.2" fill="#6a4a4a" stroke="#1a1a1a" stroke-width="0.9"/><path d="M7 1 A6 6 0 0 0 1 7 L7 7Z M7 7 L13 7 A6 6 0 0 1 7 13Z" fill="#f0e6e6"/><path d="M7 7 L13 7 A6 6 0 0 0 7 1Z" fill="#c07060"/></svg><svg class="a" style="left:1685px;top:270px" width="14" height="14"><rect x="0.5" y="0.5" width="13" height="13" fill="#a8a8a8" stroke="#333"/><rect x="1" y="1" width="3" height="3" fill="#6a2a2a"/><rect x="7" y="1" width="3" height="3" fill="#6a2a2a"/><rect x="4" y="4" width="3" height="3" fill="#6a2a2a"/><rect x="10" y="4" width="3" height="3" fill="#6a2a2a"/><rect x="1" y="7" width="3" height="3" fill="#6a2a2a"/><rect x="7" y="7" width="3" height="3" fill="#6a2a2a"/><rect x="4" y="10" width="3" height="3" fill="#6a2a2a"/><rect x="10" y="10" width="3" height="3" fill="#6a2a2a"/></svg><div class="a" style="left:1643px;top:292px;width:208px;height:123px;border-radius:4px;border:1px solid #5a5a5a;background:#7c7c7c"></div><div class="a" style="left:1650px;top:301px;width:173px;height:18px;background:#5680c2"></div><svg class="a" style="left:1652px;top:302px" width="16" height="16"><rect width="16" height="16" fill="#0a0a0a"/><rect x="4" y="5" width="1.5" height="11" fill="#2a1a1a"/><rect x="9" y="5" width="1.5" height="11" fill="#1e1e1e"/></svg><div class="t" style="left:1671.0px;top:305.7px;color:#fff;font-size:11px;">Tex</div><div class="chk" style="left:1806px;top:303px;width:14px;height:14px"></div><svg class="a" style="left:1807px;top:302px" width="14" height="14"><path d="M2.5 7 L5.5 10 L12 2" stroke="#eee" stroke-width="2" fill="none"/></svg><svg class="a" style="left:1653px;top:324px" width="14" height="14"><rect x="0.5" y="0.5" width="13" height="13" fill="#fdf4f4" stroke="#111" stroke-width="1"/><rect x="1.30" y="1.30" width="2.40" height="2.40" fill="#3a0202"/><rect x="7.30" y="1.30" width="2.40" height="2.40" fill="#4a0808"/><rect x="4.30" y="4.30" width="2.40" height="2.40" fill="#4a0808"/><rect x="10.30" y="4.30" width="2.40" height="2.40" fill="#5a1a1a"/><rect x="1.30" y="7.30" width="2.40" height="2.40" fill="#4a0808"/><rect x="7.30" y="7.30" width="2.40" height="2.40" fill="#5a1a1a"/><rect x="4.30" y="10.30" width="2.40" height="2.40" fill="#5a1a1a"/><rect x="10.30" y="10.30" width="2.40" height="2.40" fill="#7a4a4a"/></svg><svg class="a" style="left:1653px;top:344px" width="14" height="14"><rect x="0.5" y="0.5" width="13" height="13" fill="#fdf4f4" stroke="#111" stroke-width="1"/><rect x="1.30" y="1.30" width="2.40" height="2.40" fill="#3a0202"/><rect x="7.30" y="1.30" width="2.40" height="2.40" fill="#4a0808"/><rect x="4.30" y="4.30" width="2.40" height="2.40" fill="#4a0808"/><rect x="10.30" y="4.30" width="2.40" height="2.40" fill="#5a1a1a"/><rect x="1.30" y="7.30" width="2.40" height="2.40" fill="#4a0808"/><rect x="7.30" y="7.30" width="2.40" height="2.40" fill="#5a1a1a"/><rect x="4.30" y="10.30" width="2.40" height="2.40" fill="#5a1a1a"/><rect x="10.30" y="10.30" width="2.40" height="2.40" fill="#7a4a4a"/></svg><svg class="a" style="left:1653px;top:364px" width="14" height="14"><rect x="0.5" y="0.5" width="13" height="13" fill="#fdf4f4" stroke="#111" stroke-width="1"/><rect x="1.30" y="1.30" width="2.40" height="2.40" fill="#3a0202"/><rect x="7.30" y="1.30" width="2.40" height="2.40" fill="#4a0808"/><rect x="4.30" y="4.30" width="2.40" height="2.40" fill="#4a0808"/><rect x="10.30" y="4.30" width="2.40" height="2.40" fill="#5a1a1a"/><rect x="1.30" y="7.30" width="2.40" height="2.40" fill="#4a0808"/><rect x="7.30" y="7.30" width="2.40" height="2.40" fill="#5a1a1a"/><rect x="4.30" y="10.30" width="2.40" height="2.40" fill="#5a1a1a"/><rect x="10.30" y="10.30" width="2.40" height="2.40" fill="#7a4a4a"/></svg><svg class="a" style="left:1653px;top:383px" width="14" height="14"><rect x="0.5" y="0.5" width="13" height="13" fill="#fdf4f4" stroke="#111" stroke-width="1"/><rect x="1.30" y="1.30" width="2.40" height="2.40" fill="#3a0202"/><rect x="7.30" y="1.30" width="2.40" height="2.40" fill="#4a0808"/><rect x="4.30" y="4.30" width="2.40" height="2.40" fill="#4a0808"/><rect x="10.30" y="4.30" width="2.40" height="2.40" fill="#5a1a1a"/><rect x="1.30" y="7.30" width="2.40" height="2.40" fill="#4a0808"/><rect x="7.30" y="7.30" width="2.40" height="2.40" fill="#5a1a1a"/><rect x="4.30" y="10.30" width="2.40" height="2.40" fill="#5a1a1a"/><rect x="10.30" y="10.30" width="2.40" height="2.40" fill="#7a4a4a"/></svg><svg class="a" style="left:1652px;top:399px" width="11" height="11"><circle cx="5.5" cy="5.5" r="4.2" fill="none" stroke="#5a5a5a" stroke-width="1"/><path d="M5.5 3 V8 M3 5.5 H8" stroke="#5a5a5a" stroke-width="1"/></svg><div class="a" style="left:1750px;top:403px;width:13px;height:1px;background:#222"></div><div class="a" style="left:1750px;top:406px;width:13px;height:1px;background:#222"></div><div class="a" style="left:1832px;top:301px;width:14px;height:99px;border-radius:7px;background:#666"></div><div class="a" style="left:1832px;top:301px;width:14px;height:27px;border-radius:7px;border:1px solid #5a5a5a;background:linear-gradient(90deg,#8c8c8c,#a0a0a0,#8c8c8c)"></div><div class="a" style="left:1860px;top:293px;width:19px;height:59px;border-radius:4px;border:1px solid #3a3a3a;overflow:hidden"><div class="a" style="left:0;top:0;width:17px;height:19px;background:linear-gradient(#a6a6a6,#8c8c8c)"></div><div class="a" style="left:0;top:19px;width:17px;height:19px;background:linear-gradient(#a6a6a6,#8c8c8c);border-top:1px solid #3a3a3a"></div><div class="a" style="left:0;top:38px;width:17px;height:20px;background:linear-gradient(#555,#3a3a3a);border-top:1px solid #3a3a3a"></div></div><svg class="a" style="left:1863px;top:296px" width="13" height="50"><path d="M2 8 L6.5 3 L11 8Z M2 21 L6.5 26 L11 21Z" fill="#f4f4f4" stroke="#222" stroke-width="0.9"/><path d="M3 38 H10 L6 45Z" fill="#111" stroke="#ddd" stroke-width="0.6"/></svg><div class="a" style="left:1643px;top:420px;width:236px;height:20px;border-radius:4px;border:1px solid #333;overflow:hidden;background:#454545"><div class="a" style="left:32px;top:0;width:143px;height:18px;background:linear-gradient(#9a9a9a,#b4b4b4)"></div><div class="a" style="left:175px;top:0;width:20px;height:18px;background:linear-gradient(#a6a6a6,#8c8c8c);border-left:1px solid #3a3a3a"></div><div class="a" style="left:195px;top:0;width:20px;height:18px;background:linear-gradient(#a6a6a6,#8c8c8c);border-left:1px solid #3a3a3a"></div><div class="a" style="left:215px;top:0;width:21px;height:18px;background:linear-gradient(#a6a6a6,#8c8c8c);border-left:1px solid #3a3a3a"></div></div><svg class="a" style="left:1648px;top:424px" width="14" height="14"><rect x="0.5" y="0.5" width="13" height="13" fill="#fdf4f4" stroke="#111" stroke-width="1"/><rect x="1.30" y="1.30" width="2.40" height="2.40" fill="#3a0202"/><rect x="7.30" y="1.30" width="2.40" height="2.40" fill="#4a0808"/><rect x="4.30" y="4.30" width="2.40" height="2.40" fill="#4a0808"/><rect x="10.30" y="4.30" width="2.40" height="2.40" fill="#5a1a1a"/><rect x="1.30" y="7.30" width="2.40" height="2.40" fill="#4a0808"/><rect x="7.30" y="7.30" width="2.40" height="2.40" fill="#5a1a1a"/><rect x="4.30" y="10.30" width="2.40" height="2.40" fill="#5a1a1a"/><rect x="10.30" y="10.30" width="2.40" height="2.40" fill="#7a4a4a"/></svg><svg class="a" style="left:1664.0px;top:423.0px" width="8" height="14"><path d="M4 1.5 L7 5.5 L1 5.5Z M4 12.5 L7 8.5 L1 8.5Z" fill="#b8b8b8"/></svg><div class="t" style="left:1682.0px;top:425.7px;color:#000;font-size:11px;">Tex</div><div class="t" style="left:1824.0px;top:425.7px;color:#000;font-size:11px;">F</div><svg class="a" style="left:1841px;top:424px" width="14" height="14"><path d="M7 1.5 V12.5 M1.5 7 H12.5" stroke="#1a1a1a" stroke-width="4"/><path d="M7 2.5 V11.5 M2.5 7 H11.5" stroke="#fff" stroke-width="2"/></svg><svg class="a" style="left:1862px;top:424px" width="14" height="14"><path d="M2.5 2.5 L11.5 11.5 M11.5 2.5 L2.5 11.5" stroke="#1a1a1a" stroke-width="3.6"/><path d="M3 3 L11 11 M11 3 L3 11" stroke="#fff" stroke-width="1.8"/></svg><div class="t" style="left:1650.7px;top:450.7px;color:#000;font-size:11px;">Type:</div><div class="wmenu" style="left:1696px;top:445px;width:183px;height:20px"></div><svg class="a" style="left:1701px;top:447px" width="14" height="16"><path d="M1.5 1.5 H9.5 L12.5 4.5 V14.5 H1.5Z" fill="#f6f6f6" stroke="#1a1a1a" stroke-width="1"/><rect x="3" y="4" width="8" height="5" fill="#e6a8a8"/><circle cx="8.5" cy="5.5" r="1.5" fill="#fff0f0"/><rect x="3" y="9" width="8" height="1.3" fill="#40405a"/><rect x="3" y="10.3" width="8" height="2.7" fill="#a8a8d8"/></svg><div class="t" style="left:1719.0px;top:450.7px;color:#fff;font-size:11px;">Image or Movie</div><svg class="a" style="left:1867.0px;top:448.0px" width="8" height="14"><path d="M4 1.5 L7 5.5 L1 5.5Z M4 12.5 L7 8.5 L1 8.5Z" fill="#c8c8c8"/></svg><div class="a" style="left:1640px;top:472px;width:242px;height:1px;background:#5a5a5a"></div><div class="a" style="left:1640px;top:473px;width:242px;height:1px;background:#808080"></div><svg class="a" style="left:1648px;top:481px" width="10" height="10"><path d="M0 0.5 H8 L4 8.3Z" fill="#111"/></svg><div class="t" style="left:1660.4px;top:479.4px;color:#000;font-size:12px;">Preview</div><svg class="a" style="left:1865px;top:483px" width="12" height="6"><g fill="#555"><rect x="0" y="0" width="1" height="1"/><rect x="0" y="3" width="1" height="1"/><rect x="3" y="0" width="1" height="1"/><rect x="3" y="3" width="1" height="1"/><rect x="6" y="0" width="1" height="1"/><rect x="6" y="3" width="1" height="1"/><rect x="9" y="0" width="1" height="1"/><rect x="9" y="3" width="1" height="1"/></g></svg><svg class="a" style="left:1866px;top:484px" width="12" height="6"><g fill="#999"><rect x="0" y="0" width="1" height="1"/><rect x="0" y="3" width="1" height="1"/><rect x="3" y="0" width="1" height="1"/><rect x="3" y="3" width="1" height="1"/><rect x="6" y="0" width="1" height="1"/><rect x="6" y="3" width="1" height="1"/><rect x="9" y="0" width="1" height="1"/><rect x="9" y="3" width="1" height="1"/></g></svg><svg class="a" style="left:1643px;top:505px" width="236" height="112"><defs><clipPath id="pc"><rect width="236" height="112" rx="6"/></clipPath></defs><g clip-path="url(#pc)"><rect width="236" height="112" fill="#0a0a0a"/><g transform="translate(0 0)"><rect x="0" y="56" width="118" height="56" fill="#0d0d0d"/><rect x="5" y="9" width="8" height="2" fill="#262626"/><rect x="6" y="13" width="5" height="1.5" fill="#1e1e1e"/><rect x="16" y="9" width="10" height="2" fill="#262626"/><rect x="17" y="13" width="7" height="1.5" fill="#1e1e1e"/><rect x="30" y="9" width="6" height="2" fill="#262626"/><rect x="31" y="13" width="3" height="1.5" fill="#1e1e1e"/><rect x="40" y="9" width="14" height="2" fill="#262626"/><rect x="41" y="13" width="11" height="1.5" fill="#1e1e1e"/><rect x="62" y="9" width="9" height="2" fill="#262626"/><rect x="63" y="13" width="6" height="1.5" fill="#1e1e1e"/><rect x="76" y="9" width="12" height="2" fill="#262626"/><rect x="77" y="13" width="9" height="1.5" fill="#1e1e1e"/><rect x="92" y="9" width="8" height="2" fill="#262626"/><rect x="93" y="13" width="5" height="1.5" fill="#1e1e1e"/><rect x="104" y="9" width="10" height="2" fill="#262626"/><rect x="105" y="13" width="7" height="1.5" fill="#1e1e1e"/><rect x="26" y="16" width="1.5" height="8" fill="#2a2a2a"/><rect x="29" y="16" width="1.5" height="8" fill="#2a2a2a"/><rect x="32" y="16" width="1.5" height="8" fill="#2a2a2a"/><rect x="35" y="16" width="1.5" height="8" fill="#2a2a2a"/><rect x="38" y="16" width="1.5" height="8" fill="#2a2a2a"/><rect x="41" y="16" width="1.5" height="8" fill="#2a2a2a"/><rect x="62" y="8" width="2" height="22" fill="#202020"/><rect x="65" y="8" width="2" height="22" fill="#202020"/><rect x="3" y="0" width="1.5" height="112" fill="#1a1a1a"/><rect x="57" y="0" width="1.5" height="112" fill="#1e1e1e"/><rect x="60" y="0" width="1.5" height="112" fill="#161616"/><rect x="115" y="0" width="1.5" height="112" fill="#242424"/><path d="M 23 26 Q 14 26 14 34 V 48 Q 14 56 23 56" stroke="#252525" stroke-width="1.6" fill="none"/><path d="M 37 26 Q 28 26 28 34 V 48 Q 28 56 37 56" stroke="#252525" stroke-width="1.6" fill="none"/><path d="M 51 26 Q 42 26 42 34 V 48 Q 42 56 51 56" stroke="#252525" stroke-width="1.6" fill="none"/><path d="M 79 26 Q 70 26 70 34 V 48 Q 70 56 79 56" stroke="#252525" stroke-width="1.6" fill="none"/><path d="M 93 26 Q 84 26 84 34 V 48 Q 84 56 93 56" stroke="#252525" stroke-width="1.6" fill="none"/><path d="M 107 26 Q 98 26 98 34 V 48 Q 98 56 107 56" stroke="#252525" stroke-width="1.6" fill="none"/><rect x="0" y="55" width="118" height="1" fill="#1a1a1a"/><rect x="8" y="57" width="7" height="55" fill="#1c1c1c"/><rect x="10" y="57" width="2" height="55" fill="#262626"/><path d="M 28 60 Q 20 60 20 66 V 78 Q 20 84 28 84" stroke="#222" stroke-width="1.5" fill="none"/><path d="M 42 60 Q 34 60 34 66 V 78 Q 34 84 42 84" stroke="#222" stroke-width="1.5" fill="none"/><path d="M 28 84 Q 20 84 20 90 V 102 Q 20 108 28 108" stroke="#222" stroke-width="1.5" fill="none"/><path d="M 42 84 Q 34 84 34 90 V 102 Q 34 108 42 108" stroke="#222" stroke-width="1.5" fill="none"/><rect x="66" y="57" width="2" height="55" fill="#161616"/><rect x="82" y="57" width="2" height="55" fill="#181818"/><rect x="100" y="57" width="2" height="55" fill="#141414"/></g><g transform="translate(118 0)"><rect x="0" y="56" width="118" height="56" fill="#0d0d0d"/><rect x="5" y="9" width="8" height="2" fill="#262626"/><rect x="6" y="13" width="5" height="1.5" fill="#1e1e1e"/><rect x="16" y="9" width="10" height="2" fill="#262626"/><rect x="17" y="13" width="7" height="1.5" fill="#1e1e1e"/><rect x="30" y="9" width="6" height="2" fill="#262626"/><rect x="31" y="13" width="3" height="1.5" fill="#1e1e1e"/><rect x="40" y="9" width="14" height="2" fill="#262626"/><rect x="41" y="13" width="11" height="1.5" fill="#1e1e1e"/><rect x="62" y="9" width="9" height="2" fill="#262626"/><rect x="63" y="13" width="6" height="1.5" fill="#1e1e1e"/><rect x="76" y="9" width="12" height="2" fill="#262626"/><rect x="77" y="13" width="9" height="1.5" fill="#1e1e1e"/><rect x="92" y="9" width="8" height="2" fill="#262626"/><rect x="93" y="13" width="5" height="1.5" fill="#1e1e1e"/><rect x="104" y="9" width="10" height="2" fill="#262626"/><rect x="105" y="13" width="7" height="1.5" fill="#1e1e1e"/><rect x="26" y="16" width="1.5" height="8" fill="#2a2a2a"/><rect x="29" y="16" width="1.5" height="8" fill="#2a2a2a"/><rect x="32" y="16" width="1.5" height="8" fill="#2a2a2a"/><rect x="35" y="16" width="1.5" height="8" fill="#2a2a2a"/><rect x="38" y="16" width="1.5" height="8" fill="#2a2a2a"/><rect x="41" y="16" width="1.5" height="8" fill="#2a2a2a"/><rect x="62" y="8" width="2" height="22" fill="#202020"/><rect x="65" y="8" width="2" height="22" fill="#202020"/><rect x="3" y="0" width="1.5" height="112" fill="#1a1a1a"/><rect x="57" y="0" width="1.5" height="112" fill="#1e1e1e"/><rect x="60" y="0" width="1.5" height="112" fill="#161616"/><rect x="115" y="0" width="1.5" height="112" fill="#242424"/><path d="M 23 26 Q 14 26 14 34 V 48 Q 14 56 23 56" stroke="#252525" stroke-width="1.6" fill="none"/><path d="M 37 26 Q 28 26 28 34 V 48 Q 28 56 37 56" stroke="#252525" stroke-width="1.6" fill="none"/><path d="M 51 26 Q 42 26 42 34 V 48 Q 42 56 51 56" stroke="#252525" stroke-width="1.6" fill="none"/><path d="M 79 26 Q 70 26 70 34 V 48 Q 70 56 79 56" stroke="#252525" stroke-width="1.6" fill="none"/><path d="M 93 26 Q 84 26 84 34 V 48 Q 84 56 93 56" stroke="#252525" stroke-width="1.6" fill="none"/><path d="M 107 26 Q 98 26 98 34 V 48 Q 98 56 107 56" stroke="#252525" stroke-width="1.6" fill="none"/><rect x="0" y="55" width="118" height="1" fill="#1a1a1a"/><rect x="8" y="57" width="7" height="55" fill="#1c1c1c"/><rect x="10" y="57" width="2" height="55" fill="#262626"/><path d="M 28 60 Q 20 60 20 66 V 78 Q 20 84 28 84" stroke="#222" stroke-width="1.5" fill="none"/><path d="M 42 60 Q 34 60 34 66 V 78 Q 34 84 42 84" stroke="#222" stroke-width="1.5" fill="none"/><path d="M 28 84 Q 20 84 20 90 V 102 Q 20 108 28 108" stroke="#222" stroke-width="1.5" fill="none"/><path d="M 42 84 Q 34 84 34 90 V 102 Q 34 108 42 108" stroke="#222" stroke-width="1.5" fill="none"/><rect x="66" y="57" width="2" height="55" fill="#161616"/><rect x="82" y="57" width="2" height="55" fill="#181818"/><rect x="100" y="57" width="2" height="55" fill="#141414"/></g></g></svg><div class="a" style="left:1754px;top:620px;width:14px;height:1px;background:#222"></div><div class="a" style="left:1754px;top:623px;width:14px;height:1px;background:#222"></div><div class="a" style="left:1643px;top:630px;width:236px;height:20px;border-radius:4px;border:1px solid #262626;overflow:hidden;background:linear-gradient(#585858,#3c3c3c)"><div class="a" style="left:0;top:0;width:77px;height:18px;background:linear-gradient(#6a94d6,#4a76bb)"></div><div class="a" style="left:155px;top:0;width:1px;height:18px;background:#262626"></div></div><div class="t" style="left:1663.0px;top:635.7px;color:#000;font-size:11px;">Texture</div><div class="t" style="left:1738.0px;top:635.7px;color:#fff;font-size:11px;">Material</div><div class="t" style="left:1825.0px;top:635.7px;color:#fff;font-size:11px;">Both</div><div class="chk" style="left:1646px;top:658px"></div><div class="t" style="left:1667.0px;top:660.7px;color:#000;font-size:11px;">Show Alpha</div><div class="a" style="left:1640px;top:682px;width:242px;height:1px;background:#5a5a5a"></div><div class="a" style="left:1640px;top:683px;width:242px;height:1px;background:#808080"></div><svg class="a" style="left:1648px;top:691px" width="10" height="10"><path d="M0.5 0 V8 L8 4Z" fill="#111"/></svg><div class="t" style="left:1660.4px;top:689.4px;color:#000;font-size:12px;">Colors</div><svg class="a" style="left:1865px;top:693px" width="12" height="6"><g fill="#555"><rect x="0" y="0" width="1" height="1"/><rect x="0" y="3" width="1" height="1"/><rect x="3" y="0" width="1" height="1"/><rect x="3" y="3" width="1" height="1"/><rect x="6" y="0" width="1" height="1"/><rect x="6" y="3" width="1" height="1"/><rect x="9" y="0" width="1" height="1"/><rect x="9" y="3" width="1" height="1"/></g></svg><svg class="a" style="left:1866px;top:694px" width="12" height="6"><g fill="#999"><rect x="0" y="0" width="1" height="1"/><rect x="0" y="3" width="1" height="1"/><rect x="3" y="0" width="1" height="1"/><rect x="3" y="3" width="1" height="1"/><rect x="6" y="0" width="1" height="1"/><rect x="6" y="3" width="1" height="1"/><rect x="9" y="0" width="1" height="1"/><rect x="9" y="3" width="1" height="1"/></g></svg><div class="a" style="left:1640px;top:706px;width:242px;height:1px;background:#5a5a5a"></div><div class="a" style="left:1640px;top:707px;width:242px;height:1px;background:#808080"></div><svg class="a" style="left:1648px;top:715px" width="10" height="10"><path d="M0 0.5 H8 L4 8.3Z" fill="#111"/></svg><div class="t" style="left:1660.4px;top:713.4px;color:#000;font-size:12px;">Image</div><svg class="a" style="left:1865px;top:717px" width="12" height="6"><g fill="#555"><rect x="0" y="0" width="1" height="1"/><rect x="0" y="3" width="1" height="1"/><rect x="3" y="0" width="1" height="1"/><rect x="3" y="3" width="1" height="1"/><rect x="6" y="0" width="1" height="1"/><rect x="6" y="3" width="1" height="1"/><rect x="9" y="0" width="1" height="1"/><rect x="9" y="3" width="1" height="1"/></g></svg><svg class="a" style="left:1866px;top:718px" width="12" height="6"><g fill="#999"><rect x="0" y="0" width="1" height="1"/><rect x="0" y="3" width="1" height="1"/><rect x="3" y="0" width="1" height="1"/><rect x="3" y="3" width="1" height="1"/><rect x="6" y="0" width="1" height="1"/><rect x="6" y="3" width="1" height="1"/><rect x="9" y="0" width="1" height="1"/><rect x="9" y="3" width="1" height="1"/></g></svg><div class="a" style="left:1643px;top:739px;width:236px;height:20px;border-radius:4px;border:1px solid #333;overflow:hidden;background:#454545"><div class="a" style="left:31px;top:0;width:144px;height:18px;background:linear-gradient(#9a9a9a,#b4b4b4)"></div><div class="a" style="left:175px;top:0;width:20px;height:18px;background:linear-gradient(#a6a6a6,#8c8c8c);border-left:1px solid #3a3a3a"></div><div class="a" style="left:195px;top:0;width:20px;height:18px;background:linear-gradient(#a6a6a6,#8c8c8c);border-left:1px solid #3a3a3a"></div><div class="a" style="left:215px;top:0;width:21px;height:18px;background:linear-gradient(#a6a6a6,#8c8c8c);border-left:1px solid #3a3a3a"></div></div><svg class="a" style="left:1648px;top:741px" width="14" height="16"><path d="M1.5 1.5 H9.5 L12.5 4.5 V14.5 H1.5Z" fill="#f6f6f6" stroke="#1a1a1a" stroke-width="1"/><rect x="3" y="4" width="8" height="5" fill="#e6a8a8"/><circle cx="8.5" cy="5.5" r="1.5" fill="#fff0f0"/><rect x="3" y="9" width="8" height="1.3" fill="#40405a"/><rect x="3" y="10.3" width="8" height="2.7" fill="#a8a8d8"/></svg><svg class="a" style="left:1664.0px;top:742.0px" width="8" height="14"><path d="M4 1.5 L7 5.5 L1 5.5Z M4 12.5 L7 8.5 L1 8.5Z" fill="#b8b8b8"/></svg><div class="t" style="left:1681.0px;top:744.7px;color:#000;font-size:11px;">diffuse</div><div class="t" style="left:1824.0px;top:744.7px;color:#000;font-size:11px;">F</div><svg class="a" style="left:1840px;top:741px" width="16" height="16"><path d="M1.5 4.5 H6 L7 3.5 H13.5 V13.5 H1.5Z" fill="#b8ac70" stroke="#1a1a1a" stroke-width="1"/><rect x="5.5" y="1.5" width="7" height="6" fill="#f4f4f4" stroke="#1a1a1a" stroke-width="0.8"/><path d="M7 3.5 H11 M7 5 H11" stroke="#888" stroke-width="0.7"/><path d="M1.5 7.5 H14.5 L13.5 14.5 H1.5Z" fill="#e0d49a" stroke="#1a1a1a" stroke-width="1"/></svg><svg class="a" style="left:1862px;top:742px" width="14" height="14"><path d="M2.5 2.5 L11.5 11.5 M11.5 2.5 L2.5 11.5" stroke="#1a1a1a" stroke-width="3.6"/><path d="M3 3 L11 11 M11 3 L3 11" stroke="#fff" stroke-width="1.8"/></svg><div class="t" style="left:1650.5px;top:769.7px;color:#000;font-size:11px;">Source:</div><div class="wmenu" style="left:1726px;top:765px;width:153px;height:19px"></div><div class="t" style="left:1733.0px;top:769.7px;color:#fff;font-size:11px;">Single Image</div><svg class="a" style="left:1867.0px;top:767.0px" width="8" height="14"><path d="M4 1.5 L7 5.5 L1 5.5Z M4 12.5 L7 8.5 L1 8.5Z" fill="#c8c8c8"/></svg><div class="a" style="left:1643px;top:790px;width:236px;height:19px;border-radius:4px;border:1px solid #3a3a3a;overflow:hidden;background:linear-gradient(#9a9a9a,#b4b4b4)"><div class="a" style="left:0;top:0;width:19px;height:17px;background:linear-gradient(#a6a6a6,#8c8c8c);border-right:1px solid #3a3a3a"></div><div class="a" style="left:194px;top:0;width:21px;height:17px;background:linear-gradient(#a6a6a6,#8c8c8c);border-left:1px solid #3a3a3a"></div><div class="a" style="left:215px;top:0;width:21px;height:17px;background:linear-gradient(#a6a6a6,#8c8c8c);border-left:1px solid #3a3a3a"></div></div><svg class="a" style="left:1645px;top:792px" width="16" height="16"><path d="M1 8 L8 4 L15 8 L15 11 L8 14 L1 11Z" fill="#d8d0a0" stroke="#222" stroke-width="0.9"/><path d="M1 8 L8 11 L15 8" stroke="#222" stroke-width="0.8" fill="none"/><path d="M5 8 L8 6 L11 8Z" fill="#222"/></svg><div class="t" style="left:1668.0px;top:794.7px;color:#000;font-size:11px;">//diffuse.png</div><svg class="a" style="left:1840px;top:791px" width="16" height="16"><path d="M1.5 4.5 H6 L7 3.5 H13.5 V13.5 H1.5Z" fill="#b8ac70" stroke="#1a1a1a" stroke-width="1"/><rect x="5.5" y="1.5" width="7" height="6" fill="#f4f4f4" stroke="#1a1a1a" stroke-width="0.8"/><path d="M7 3.5 H11 M7 5 H11" stroke="#888" stroke-width="0.7"/><path d="M1.5 7.5 H14.5 L13.5 14.5 H1.5Z" fill="#e0d49a" stroke="#1a1a1a" stroke-width="1"/></svg><svg class="a" style="left:1861px;top:791px" width="16" height="16"><path d="M2.5 8 A5.5 4.5 0 0 1 12 4.5 M13.5 8 A5.5 4.5 0 0 1 4 11.5" stroke="#151515" stroke-width="3.4" fill="none"/><path d="M2.5 8 A5.5 4.5 0 0 1 12 4.5 M13.5 8 A5.5 4.5 0 0 1 4 11.5" stroke="#f4f4f4" stroke-width="1.6" fill="none"/><path d="M9.5 1.5 L14.5 4.5 L9.5 7.5Z M6.5 8.5 L1.5 11.5 L6.5 14.5Z" fill="#f4f4f4" stroke="#151515" stroke-width="0.9"/></svg><div class="t" style="left:1650.5px;top:819.7px;color:#000;font-size:11px;letter-spacing:0.17px">Image: size 2048 x 2048, RGBA byte</div><div class="t" style="left:1650.5px;top:845.2px;color:#000;font-size:11px;">Color Space:</div><div class="wmenu" style="left:1726px;top:840px;width:153px;height:19px"></div><div class="t" style="left:1733.0px;top:845.2px;color:#fff;font-size:11px;">sRGB</div><svg class="a" style="left:1867.0px;top:842.0px" width="8" height="14"><path d="M4 1.5 L7 5.5 L1 5.5Z M4 12.5 L7 8.5 L1 8.5Z" fill="#c8c8c8"/></svg><div class="chk" style="left:1646px;top:864px"></div><div class="t" style="left:1667.0px;top:866.7px;color:#000;font-size:11px;">View as Render</div><div class="chk" style="left:1646px;top:889px"></div><svg class="a" style="left:1646px;top:887px" width="16" height="16"><path d="M3 8 L6.5 11.5 L13.5 3" stroke="#eee" stroke-width="2.2" fill="none"/></svg><div class="t" style="left:1667.0px;top:891.7px;color:#fff;font-size:11px;">Use Alpha</div><div class="t" style="left:1650.5px;top:913.2px;color:#000;font-size:11px;">Alpha:</div><div class="wmenu" style="left:1726px;top:909px;width:153px;height:19px"></div><div class="t" style="left:1733.0px;top:913.2px;color:#fff;font-size:11px;">Straight</div><svg class="a" style="left:1867.0px;top:911.0px" width="8" height="14"><path d="M4 1.5 L7 5.5 L1 5.5Z M4 12.5 L7 8.5 L1 8.5Z" fill="#c8c8c8"/></svg><div class="chk" style="left:1646px;top:936px"></div><div class="t" style="left:1667.0px;top:938.7px;color:#000;font-size:11px;">Fields</div><div class="a" style="left:1643px;top:955px;width:236px;height:20px;border-radius:4px;border:1px solid #4a4a4a;overflow:hidden;background:#5c5c5c"><div class="a" style="left:0;top:0;width:117px;height:18px;background:linear-gradient(#6e8cbc,#5a7aae)"></div></div><div class="t" style="left:1674.0px;top:960.7px;color:#354a70;font-size:11px;">Upper First</div><div class="t" style="left:1791.0px;top:960.7px;color:#9a9a9a;font-size:11px;">Lower First</div><div class="a" style="left:1640px;top:982px;width:242px;height:1px;background:#5a5a5a"></div><div class="a" style="left:1640px;top:983px;width:242px;height:1px;background:#808080"></div><svg class="a" style="left:1648px;top:991px" width="10" height="10"><path d="M0.5 0 V8 L8 4Z" fill="#111"/></svg><div class="t" style="left:1660.4px;top:989.4px;color:#000;font-size:12px;">Image Sampling</div><svg class="a" style="left:1865px;top:993px" width="12" height="6"><g fill="#555"><rect x="0" y="0" width="1" height="1"/><rect x="0" y="3" width="1" height="1"/><rect x="3" y="0" width="1" height="1"/><rect x="3" y="3" width="1" height="1"/><rect x="6" y="0" width="1" height="1"/><rect x="6" y="3" width="1" height="1"/><rect x="9" y="0" width="1" height="1"/><rect x="9" y="3" width="1" height="1"/></g></svg><svg class="a" style="left:1866px;top:994px" width="12" height="6"><g fill="#999"><rect x="0" y="0" width="1" height="1"/><rect x="0" y="3" width="1" height="1"/><rect x="3" y="0" width="1" height="1"/><rect x="3" y="3" width="1" height="1"/><rect x="6" y="0" width="1" height="1"/><rect x="6" y="3" width="1" height="1"/><rect x="9" y="0" width="1" height="1"/><rect x="9" y="3" width="1" height="1"/></g></svg><svg class="a" style="left:1635px;top:989px" width="12" height="12"><path d="M0 1 L11 12 M0 5 L7 12 M0 9 L3 12" stroke="#1e1e1e" stroke-width="1.2"/><path d="M0 2.2 L9.8 12 M0 6.2 L5.8 12 M0 10.2 L1.8 12" stroke="#a8a8a8" stroke-width="0.9"/></svg></body></html>
